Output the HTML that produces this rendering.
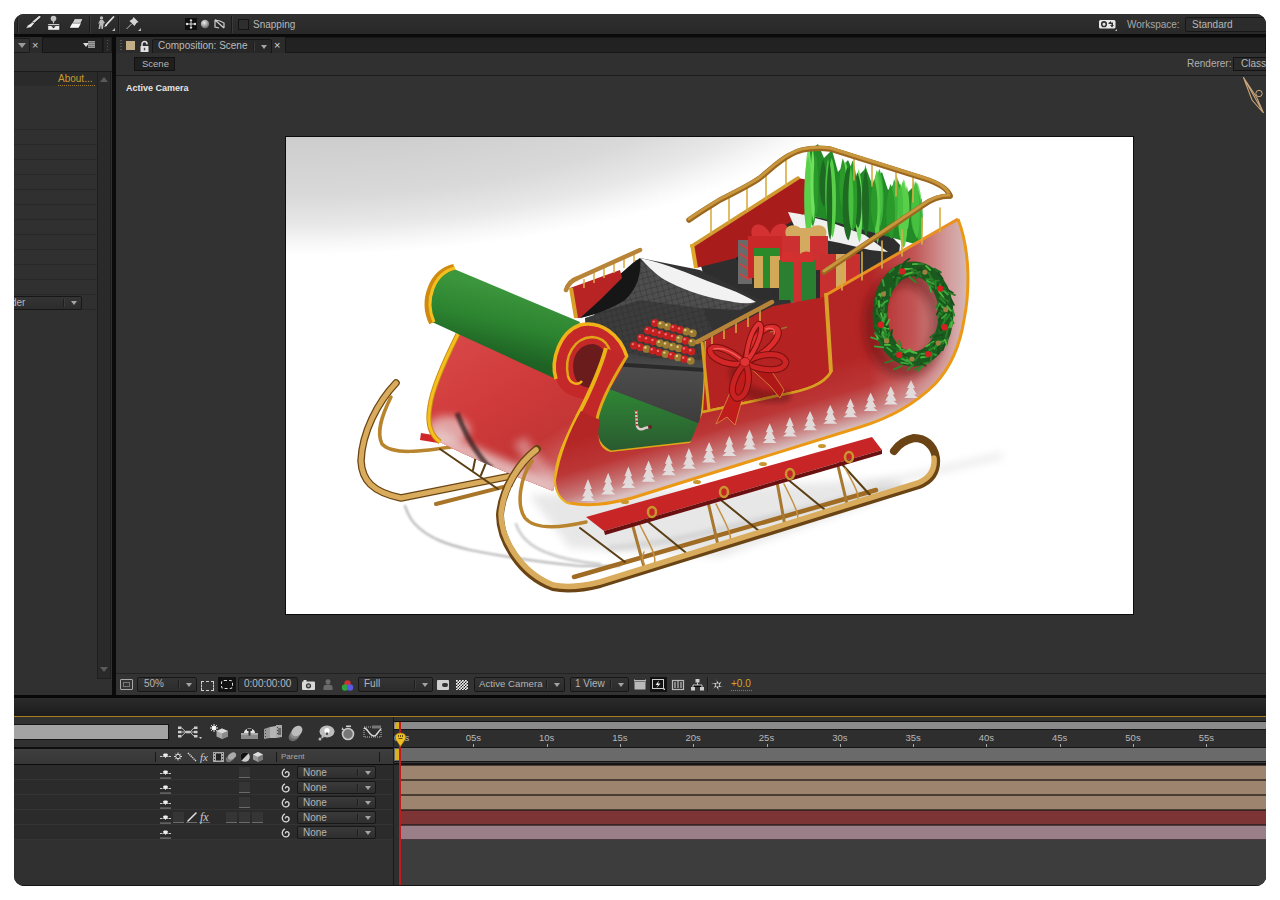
<!DOCTYPE html>
<html><head><meta charset="utf-8">
<style>
*{margin:0;padding:0;box-sizing:border-box}
html,body{width:1280px;height:900px;background:#fff;overflow:hidden;font-family:"Liberation Sans",sans-serif;font-size:10px;color:#b4b4b4}
.a{position:absolute}
#win{position:absolute;left:0;top:0;width:1280px;height:900px;background:#0a0a0a;clip-path:inset(14px 14px 14px 14px round 10px)}
.t{position:absolute;white-space:nowrap;line-height:10px;height:10px}
.dd{position:absolute;background:linear-gradient(#343434,#2c2c2c);border:1px solid #171717;border-radius:2px}
.dd .ar{position:absolute;right:4px;top:50%;margin-top:-2px;width:0;height:0;border-left:3.5px solid transparent;border-right:3.5px solid transparent;border-top:4px solid #a4a4a4}
.dd .sp{position:absolute;right:16px;top:2px;bottom:2px;width:2px;border-left:1px solid #1e1e1e;border-right:1px solid #3c3c3c}
.sep{position:absolute;width:2px;border-left:1px solid #1a1a1a;border-right:1px solid #3a3a3a}
svg{position:absolute;overflow:visible}
</style></head><body>
<div id="win">
  <!-- ===== toolbar ===== -->
  <div class="a" style="left:14px;top:14px;width:1252px;height:20px;background:linear-gradient(#303030,#282828)"></div>
  <div class="a" style="left:14px;top:34px;width:1252px;height:3px;background:#0a0a0a"></div>
  <div class="sep" style="left:17px;top:18px;height:15px"></div>
  <div class="sep" style="left:89px;top:16px;height:17px"></div>
  <div class="sep" style="left:118px;top:16px;height:17px"></div>
  <div class="sep" style="left:231px;top:16px;height:17px"></div>
  <!-- brush -->
  <svg style="left:25px;top:16px" width="16" height="13" viewBox="0 0 16 13">
    <path d="M14.5 0.8 L7.5 6.8" stroke="#111" stroke-width="3.6" stroke-linecap="round"/>
    <path d="M14.5 0.8 L7.5 6.8" stroke="#d8d8d8" stroke-width="2.2" stroke-linecap="round"/>
    <path d="M8 5.8 L2.8 9.2 L0.6 12.4 L5.8 11.6 L9.3 7.6 Z" fill="#e8e8e8" stroke="#111" stroke-width="0.6"/>
  </svg>
  <!-- stamp -->
  <svg style="left:47px;top:15px" width="14" height="16" viewBox="0 0 14 16">
    <circle cx="6.5" cy="3.6" r="2.8" fill="#c4c4c4"/>
    <rect x="5.9" y="6" width="1.2" height="3" fill="#ccc"/>
    <path d="M0.7 8.7 H12.8 V15.3 H0.7 Z" fill="#eeeeee" stroke="#111" stroke-width="0.8"/>
    <rect x="0.7" y="10" width="12.1" height="1" fill="#444"/>
    <path d="M4.3 11.2 L8.7 11.2 L6.5 13.3 Z" fill="#1a1a1a"/>
  </svg>
  <!-- eraser -->
  <svg style="left:69px;top:18px" width="15" height="11" viewBox="0 0 15 11">
    <path d="M5.5 0.6 H14.2 L9.5 9.8 H0.8 Z" fill="#d0d0d0" stroke="#111" stroke-width="0.8"/>
    <path d="M3.3 5.2 H12 L9.5 9.8 H0.8 Z" fill="#f6f6f6"/>
    <path d="M3.3 5.2 H12" stroke="#888" stroke-width="0.8"/>
  </svg>
  <!-- roto brush -->
  <svg style="left:97px;top:16px" width="19" height="15" viewBox="0 0 19 15">
    <circle cx="4.5" cy="2" r="1.7" fill="#bbb"/>
    <path d="M3 4 L6 4 L8 7 L6.5 7.5 L6 13 L4.5 13 L4 9 L3 13 L1.5 13 L2.5 7 L1 8 Z" fill="#b8b8b8"/>
    <path d="M16.5 1 L9 9" stroke="#e0e0e0" stroke-width="1.8" stroke-linecap="round"/>
    <path d="M9.5 8 L7 11 L10 10 Z" fill="#eee"/>
    <path d="M15 15 L18 12 L18 15 Z" fill="#bbb"/>
  </svg>
  <!-- pin -->
  <svg style="left:126px;top:16px" width="15" height="15" viewBox="0 0 15 15">
    <path d="M7.5 1 L12.5 6 L10.5 7 L8.5 10 L3.5 5 L6.5 3 Z" fill="#d4d4d4"/>
    <path d="M5.5 8 L0.5 13" stroke="#bbb" stroke-width="1"/>
    <path d="M12 15 L15 12 L15 15 Z" fill="#bbb"/>
  </svg>
  <!-- axis -->
  <div class="a" style="left:185px;top:18px;width:12px;height:12px;background:#0e0e0e"></div>
  <svg style="left:185px;top:18px" width="12" height="12" viewBox="0 0 12 12">
    <path d="M6 1.5 V10.5 M1.5 6 H10.5" stroke="#ddd" stroke-width="1"/>
    <path d="M6 1 L4.5 3 H7.5 Z M6 11 L4.5 9 H7.5 Z" fill="#ddd"/>
    <circle cx="2" cy="6" r="1.2" fill="#ddd"/><circle cx="10" cy="6" r="1.2" fill="#ddd"/>
  </svg>
  <svg style="left:200px;top:19px" width="10" height="10" viewBox="0 0 10 10">
    <defs><radialGradient id="sph" cx="0.4" cy="0.35" r="0.6"><stop offset="0" stop-color="#eee"/><stop offset="1" stop-color="#777"/></radialGradient></defs>
    <circle cx="5" cy="5" r="4.2" fill="url(#sph)"/>
  </svg>
  <svg style="left:214px;top:19px" width="11" height="10" viewBox="0 0 11 10">
    <path d="M1 1 L10 9 M1 1 V8 L5 9 M1 1 L6 2 L10 4 V9" stroke="#d0d0d0" stroke-width="1.2" fill="none"/>
  </svg>
  <div class="a" style="left:238px;top:19px;width:11px;height:11px;background:#2e2e2e;border:1px solid #141414"></div>
  <div class="t" style="left:253px;top:20px;color:#b8b8b8">Snapping</div>

  <!-- workspace -->
  <svg style="left:1099px;top:20px" width="18" height="11" viewBox="0 0 18 11">
    <rect x="0" y="0" width="16.5" height="8.5" rx="1.5" fill="#e8e8e8"/>
    <circle cx="5" cy="4.2" r="2.3" fill="none" stroke="#333" stroke-width="1.6"/>
    <path d="M9.5 3 L12 1 L12 2.5 H14 V5 L15 5 L13 7.5 L11 5 H12.5 V4 H9.5 Z" fill="#333"/>
    <path d="M16 11 L18 9 L18 11 Z" fill="#ccc"/>
  </svg>
  <div class="t" style="left:1127px;top:20px;color:#a8a8a8">Workspace:</div>
  <div class="a" style="left:1185px;top:17px;width:90px;height:15px;background:#2c2c2c;border:1px solid #171717;border-radius:2px"></div>
  <div class="t" style="left:1192px;top:20px;color:#b8b8b8">Standard</div>

  <!-- ===== left panel ===== -->
  <div class="a" style="left:14px;top:37px;width:98px;height:16px;background:#2b2b2b"></div>
  <div class="a" style="left:14px;top:38px;width:16px;height:15px;background:#303030;border:1px solid #1a1a1a;border-left:none;border-radius:0 2px 2px 0"></div>
  <div class="a" style="left:18px;top:43px;width:0;height:0;border-left:4px solid transparent;border-right:4px solid transparent;border-top:5px solid #9a9a9a"></div>
  <div class="t" style="left:32px;top:40px;color:#ccc;font-size:11px">×</div>
  <div class="a" style="left:42px;top:37px;width:61px;height:16px;background:#222;border:1px solid #161616"></div>
  <div class="a" style="left:83px;top:43px;width:0;height:0;border-left:3px solid transparent;border-right:3px solid transparent;border-top:4px solid #ddd"></div>
  <div class="a" style="left:88px;top:41px;width:7px;height:7px;background:repeating-linear-gradient(#9a9a9a 0 1px,#777 1px 2px)"></div>
  <div class="a" style="left:103px;top:37px;width:9px;height:16px;background:#262626;border:1px solid #1c1c1c"></div>
  <div class="a" style="left:107px;top:40px;width:1px;height:10px;background:repeating-linear-gradient(#555 0 1px,transparent 1px 3px)"></div>
  <div class="a" style="left:14px;top:53px;width:98px;height:18px;background:#303030"></div>
  <div class="a" style="left:14px;top:71px;width:98px;height:1px;background:#1a1a1a"></div>
  <div class="a" style="left:14px;top:72px;width:98px;height:623px;background:#303030"></div>
  <div class="a" style="left:14px;top:72px;width:83px;height:14px;background:#2a2a2a"></div>
  <div class="t" style="left:58px;top:74px;color:#c89b2e">About...</div>
  <div class="a" style="left:58px;top:85px;width:37px;height:1px;background:repeating-linear-gradient(90deg,#a07a20 0 1px,transparent 1px 2px)"></div>
  <div class="a" style="left:14px;top:129px;width:83px;height:1px;background:#282828"></div>
  <div class="a" style="left:14px;top:144px;width:83px;height:1px;background:#282828"></div>
  <div class="a" style="left:14px;top:159px;width:83px;height:1px;background:#282828"></div>
  <div class="a" style="left:14px;top:174px;width:83px;height:1px;background:#282828"></div>
  <div class="a" style="left:14px;top:189px;width:83px;height:1px;background:#282828"></div>
  <div class="a" style="left:14px;top:204px;width:83px;height:1px;background:#282828"></div>
  <div class="a" style="left:14px;top:219px;width:83px;height:1px;background:#282828"></div>
  <div class="a" style="left:14px;top:234px;width:83px;height:1px;background:#282828"></div>
  <div class="a" style="left:14px;top:249px;width:83px;height:1px;background:#282828"></div>
  <div class="a" style="left:14px;top:264px;width:83px;height:1px;background:#282828"></div>
  <div class="a" style="left:14px;top:279px;width:83px;height:1px;background:#282828"></div>
  <div class="a" style="left:14px;top:294px;width:83px;height:1px;background:#282828"></div>
  <div class="a" style="left:14px;top:309px;width:83px;height:1px;background:#282828"></div>
  <div class="a" style="left:97px;top:72px;width:14px;height:607px;background:#2a2a2a;border-left:1px solid #1e1e1e;border-right:1px solid #1e1e1e;border-bottom:1px solid #1e1e1e"></div>
  <div class="a" style="left:100px;top:77px;width:0;height:0;border-left:4px solid transparent;border-right:4px solid transparent;border-bottom:5px solid #5a5a5a"></div>
  <div class="a" style="left:100px;top:667px;width:0;height:0;border-left:4px solid transparent;border-right:4px solid transparent;border-top:5px solid #5a5a5a"></div>
  <div class="dd" style="left:0px;top:296px;width:82px;height:14px"><div class="sp"></div><div class="ar"></div></div>
  <div class="t" style="left:11px;top:298px;color:#b8b8b8">der</div>
  <div class="a" style="left:112px;top:37px;width:4px;height:661px;background:#0a0a0a"></div>

  <!-- ===== comp panel ===== -->
  <div class="a" style="left:116px;top:37px;width:1150px;height:16px;background:#2b2b2b"></div>
  <div class="a" style="left:120px;top:40px;width:2px;height:10px;background:repeating-linear-gradient(#555 0 1px,transparent 1px 3px)"></div>
  <div class="a" style="left:126px;top:41px;width:9px;height:9px;background:#c2ad86"></div>
  <svg style="left:140px;top:41px" width="9" height="11" viewBox="0 0 9 11">
    <path d="M2 5 V3 A2.5 2.5 0 0 1 7 3 V3.5" stroke="#ddd" stroke-width="1.5" fill="none"/>
    <rect x="0.5" y="5" width="8" height="6" fill="#e0e0e0"/>
    <rect x="3.8" y="6.8" width="1.4" height="2.5" fill="#444"/>
  </svg>
  <div class="dd" style="left:152px;top:39px;width:120px;height:15px;background:#272727"><div class="sp"></div><div class="ar"></div></div>
  <div class="t" style="left:158px;top:41px;color:#bcbcbc">Composition: Scene</div>
  <div class="t" style="left:274px;top:40px;color:#d8d8d8;font-size:11px">×</div>
  <div class="a" style="left:285px;top:37px;width:981px;height:16px;background:#222;border:1px solid #161616"></div>
  <div class="a" style="left:116px;top:53px;width:1150px;height:22px;background:#303030"></div>
  <div class="a" style="left:134px;top:57px;width:41px;height:14px;background:#1f1f1f;border:1px solid #121212"></div>
  <div class="t" style="left:142px;top:59px;color:#b8b8b8;font-size:9.5px">Scene</div>
  <div class="t" style="left:1187px;top:59px;color:#b0b0b0">Renderer:</div>
  <div class="a" style="left:1233px;top:57px;width:40px;height:14px;background:#2a2a2a;border:1px solid #121212"></div>
  <div class="t" style="left:1241px;top:59px;color:#b8b8b8">Class</div>
  <div class="a" style="left:116px;top:75px;width:1150px;height:1px;background:#1c1c1c"></div>
  <div class="a" style="left:116px;top:76px;width:1150px;height:598px;background:#323232"></div>
  <div class="t" style="left:126px;top:83px;color:#e4e4e4;font-size:9px;font-weight:bold">Active Camera</div>
  <svg style="left:1242px;top:76px" width="24" height="40" viewBox="0 0 24 40">
    <path d="M1.5 1.5 L21.5 37 M1.5 1.5 L15 22 L21.5 37 M1.5 1.5 L10 24 L21.5 37" stroke="#c9a57a" stroke-width="1.1" fill="none"/>
    <circle cx="17" cy="17.5" r="3.2" stroke="#c9a57a" stroke-width="1" fill="none"/>
  </svg>

  <!-- comp image placeholder -->
  <div class="a" style="left:285px;top:136px;width:849px;height:479px;background:#0c0c0c"></div>
  <div class="a" style="left:286px;top:137px;width:847px;height:477px;background:radial-gradient(620px 255px at 14px -137px,#c8c8c8 0%,#cdcdcd 53.7%,#d9d9d9 76.7%,#e8e8e8 88.2%,#f8f8f8 95.7%,#fff 100%)"></div>
  <svg style="left:286px;top:137px" width="847" height="477" viewBox="286 137 847 477">
<defs>
  <linearGradient id="redL" gradientUnits="userSpaceOnUse" x1="450" y1="340" x2="540" y2="480">
    <stop offset="0" stop-color="#d84848"/><stop offset="0.45" stop-color="#d03a3a"/><stop offset="0.8" stop-color="#c43636"/><stop offset="1" stop-color="#cc6060"/>
  </linearGradient>
  <linearGradient id="redP" gradientUnits="userSpaceOnUse" x1="700" y1="410" x2="720" y2="480">
    <stop offset="0" stop-color="#b82a2a"/><stop offset="0.5" stop-color="#c04444"/><stop offset="1" stop-color="#d0a8a8"/>
  </linearGradient>
  <linearGradient id="redR" gradientUnits="userSpaceOnUse" x1="830" y1="300" x2="972" y2="300">
    <stop offset="0" stop-color="#b02424"/><stop offset="0.45" stop-color="#b82828"/><stop offset="0.75" stop-color="#c86060"/><stop offset="1" stop-color="#d8c4c4"/>
  </linearGradient>
  <linearGradient id="grn" gradientUnits="userSpaceOnUse" x1="510" y1="290" x2="495" y2="355">
    <stop offset="0" stop-color="#3c963c"/><stop offset="0.5" stop-color="#2c8430"/><stop offset="1" stop-color="#1e6224"/>
  </linearGradient>
  <linearGradient id="floor" gradientUnits="userSpaceOnUse" x1="640" y1="385" x2="640" y2="450">
    <stop offset="0" stop-color="#2f8a34"/><stop offset="1" stop-color="#2a5a30"/>
  </linearGradient>
  <linearGradient id="seatF" gradientUnits="userSpaceOnUse" x1="0" y1="345" x2="0" y2="425">
    <stop offset="0" stop-color="#3a3a3a"/><stop offset="0.3" stop-color="#4c4c4c"/><stop offset="1" stop-color="#3c3c3c"/>
  </linearGradient>
  <linearGradient id="quilt" gradientUnits="userSpaceOnUse" x1="630" y1="260" x2="700" y2="320">
    <stop offset="0" stop-color="#2a2a2a"/><stop offset="0.5" stop-color="#5a5a5a"/><stop offset="1" stop-color="#4a4a4a"/>
  </linearGradient>
  <pattern id="qp" patternUnits="userSpaceOnUse" width="8" height="8" patternTransform="rotate(30)">
    <path d="M0 0 L8 8 M8 0 L0 8" stroke="#2a2a2a" stroke-width="0.8" opacity="0.6"/>
  </pattern>
  <linearGradient id="redB" gradientUnits="userSpaceOnUse" x1="760" y1="385" x2="779" y2="450">
    <stop offset="0" stop-color="#b42626"/><stop offset="0.45" stop-color="#bc3636"/><stop offset="0.8" stop-color="#c87a7a"/><stop offset="1" stop-color="#d8c0c0"/>
  </linearGradient>
  <linearGradient id="fogR" gradientUnits="userSpaceOnUse" x1="870" y1="0" x2="968" y2="0">
    <stop offset="0" stop-color="#ffffff" stop-opacity="0"/><stop offset="0.45" stop-color="#e8e0e0" stop-opacity="0.25"/><stop offset="0.75" stop-color="#e4dcdc" stop-opacity="0.6"/><stop offset="1" stop-color="#dcd4d4" stop-opacity="0.85"/>
  </linearGradient>
  <filter id="b4" x="-50%" y="-50%" width="200%" height="200%"><feGaussianBlur stdDeviation="4"/></filter>
  <filter id="b2" x="-50%" y="-50%" width="200%" height="200%"><feGaussianBlur stdDeviation="2"/></filter>
  <filter id="b1"><feGaussianBlur stdDeviation="0.8"/></filter>
</defs>

<!-- ground shadows -->
<path d="M529 495 L720 488 L900 478 L880 500 L720 557 L570 548 Z" fill="#dedede" opacity="0.7" filter="url(#b4)"/>
<g fill="none" stroke-linecap="round">
  <path d="M405 506 C408 515 412 522 418 527 C430 538 445 544 470 550 C500 556 540 562 580 566 L620 566" stroke="#a8a8a8" stroke-width="2.2" opacity="0.85" filter="url(#b1)"/>
  <path d="M516 524 C520 536 528 545 545 552 C560 558 575 562 600 564" stroke="#b4b4b4" stroke-width="2.5" opacity="0.7" filter="url(#b1)"/>
  <path d="M610 548 C660 545 720 530 760 520 L900 486" stroke="#c8c8c8" stroke-width="6" opacity="0.6" filter="url(#b2)"/>
  <path d="M870 486 L1000 456" stroke="#d4d4d4" stroke-width="5" opacity="0.6" filter="url(#b4)"/>
</g>
<!-- ===== back runner ===== -->
<g fill="none" stroke-linecap="round" stroke-linejoin="round">
  <path d="M436 504 L511 485" stroke="#a87428" stroke-width="4"/>
  <path d="M396 383 C378 402 362 432 361 461 C362 480 372 492 401 498 L511 476" stroke="#6a4414" stroke-width="7.5"/>
  <path d="M396 383 C378 402 362 432 361 461 C362 480 372 492 401 498 L511 476" stroke="#d8ac5c" stroke-width="5"/>
  <path d="M391 397 C382 415 376 432 382 444 C392 455 420 452 457 446" stroke="#b8842e" stroke-width="3.5"/>
  <path d="M440 449 L498 489 M473 470 L476 455 M481 475 L488 458" stroke="#5a3e14" stroke-width="2"/>
</g>
<path d="M421 433 L439 436 L438 443 L420 440 Z" fill="#d02828"/>

<!-- ===== back compartment ===== -->
<!-- back seat base -->
<path d="M700 262 L740 250 L800 215 L880 225 L900 245 L895 290 L830 300 L760 305 L710 300 Z" fill="#2e2e2e"/>
<path d="M740 262 L810 225 L880 240 L860 290 L780 300 Z" fill="url(#qp)"/>
<!-- back panel -->
<path d="M692 246 L798 178 L808 180 L808 212 L760 240 L736 258 L696 268 Z" fill="#a81c1c"/>
<path d="M736 258 C760 248 790 225 808 212 L808 225 C790 240 760 260 740 265 Z" fill="#1e1e1e"/>
<path d="M692 246 L798 178" stroke="#d09a30" stroke-width="3.5" stroke-linecap="round"/>
<path d="M692 244 L696 268" stroke="#e0a828" stroke-width="4"/>
<!-- snow -->
<path d="M788 212 L800 214 L830 222 L865 235 L888 252 L870 250 L840 243 L815 238 L795 228 Z" fill="#f0f0f0"/>
<!-- tree -->
<g><path d="M806 170 L810 150 L818 144 L824 158 L832 150 L838 172 L848 160 L856 178 L866 168 L872 184 L882 172 L888 190 L898 180 L904 196 L914 186 L922 200 L922 246 L806 214 Z" fill="#228a26"/><path d="M858.7 169.0 C863.5 181.0 863.5 232.4 859.7 242.4 C853.8 234.4 853.8 185.0 858.7 169.0 Z" fill="#70e060"/><path d="M903.8 179.1 C908.7 191.1 908.7 232.7 904.8 242.7 C898.9 234.7 898.9 195.1 903.8 179.1 Z" fill="#70e060"/><path d="M896.8 175.5 C900.2 187.5 900.2 214.5 897.8 224.5 C893.5 216.5 893.5 191.5 896.8 175.5 Z" fill="#48c040"/><path d="M879.1 176.2 C883.9 188.2 883.9 216.0 880.1 226.0 C874.2 218.0 874.2 192.2 879.1 176.2 Z" fill="#48c040"/><path d="M876.9 169.8 C882.1 181.8 882.1 202.4 877.9 212.4 C871.8 204.4 871.8 185.8 876.9 169.8 Z" fill="#5ad04a"/><path d="M812.0 157.8 C818.1 169.8 818.1 216.4 813.0 226.4 C805.9 218.4 805.9 173.8 812.0 157.8 Z" fill="#2a9a2a"/><path d="M857.3 172.2 C862.9 184.2 862.9 218.1 858.3 228.1 C851.8 220.1 851.8 188.2 857.3 172.2 Z" fill="#1e6a22"/><path d="M808.5 146.3 C813.1 158.3 813.1 218.0 809.5 228.0 C803.9 220.0 803.9 162.3 808.5 146.3 Z" fill="#70e060"/><path d="M919.5 192.7 C923.8 204.7 923.8 230.9 920.5 240.9 C915.3 232.9 915.3 208.7 919.5 192.7 Z" fill="#3cb03c"/><path d="M865.4 164.3 C868.9 176.3 868.9 220.5 866.4 230.5 C862.0 222.5 862.0 180.3 865.4 164.3 Z" fill="#5ad04a"/><path d="M902.8 181.3 C909.2 193.3 909.2 238.0 903.8 248.0 C896.4 240.0 896.4 197.3 902.8 181.3 Z" fill="#5ad04a"/><path d="M831.9 164.9 C836.4 176.9 836.4 199.2 832.9 209.2 C827.4 201.2 827.4 180.9 831.9 164.9 Z" fill="#48c040"/><path d="M852.5 160.6 C858.6 172.6 858.6 221.5 853.5 231.5 C846.4 223.5 846.4 176.6 852.5 160.6 Z" fill="#2a9a2a"/><path d="M845.7 161.5 C850.4 173.5 850.4 199.3 846.7 209.3 C841.1 201.3 841.1 177.5 845.7 161.5 Z" fill="#5ad04a"/><path d="M823.1 159.2 C827.9 171.2 827.9 196.9 824.1 206.9 C818.2 198.9 818.2 175.2 823.1 159.2 Z" fill="#1e6a22"/><path d="M827.9 158.8 C831.7 170.8 831.7 212.6 828.9 222.6 C824.1 214.6 824.1 174.8 827.9 158.8 Z" fill="#48c040"/><path d="M894.2 178.9 C898.8 190.9 898.8 217.0 895.2 227.0 C889.6 219.0 889.6 194.9 894.2 178.9 Z" fill="#3cb03c"/><path d="M808.1 156.3 C813.4 168.3 813.4 229.1 809.1 239.1 C802.7 231.1 802.7 172.3 808.1 156.3 Z" fill="#5ad04a"/><path d="M831.6 157.9 C837.2 169.9 837.2 227.3 832.6 237.3 C826.0 229.3 826.0 173.9 831.6 157.9 Z" fill="#5ad04a"/><path d="M812.7 148.5 C815.8 160.5 815.8 210.9 813.7 220.9 C809.7 212.9 809.7 164.5 812.7 148.5 Z" fill="#70e060"/><path d="M844.8 161.0 C848.2 173.0 848.2 201.3 845.8 211.3 C841.5 203.3 841.5 177.0 844.8 161.0 Z" fill="#70e060"/><path d="M879.3 168.7 C884.8 180.7 884.8 215.0 880.3 225.0 C873.8 217.0 873.8 184.7 879.3 168.7 Z" fill="#3cb03c"/><path d="M915.4 186.7 C921.9 198.7 921.9 225.9 916.4 235.9 C909.0 227.9 909.0 202.7 915.4 186.7 Z" fill="#3cb03c"/><path d="M878.3 172.2 C883.7 184.2 883.7 210.0 879.3 220.0 C872.8 212.0 872.8 188.2 878.3 172.2 Z" fill="#48c040"/><path d="M829.3 161.6 C833.0 173.6 833.0 230.0 830.3 240.0 C825.5 232.0 825.5 177.6 829.3 161.6 Z" fill="#1e6a22"/><path d="M906.8 185.5 C910.2 197.5 910.2 219.6 907.8 229.6 C903.4 221.6 903.4 201.5 906.8 185.5 Z" fill="#5ad04a"/><path d="M865.4 167.3 C870.0 179.3 870.0 226.6 866.4 236.6 C860.8 228.6 860.8 183.3 865.4 167.3 Z" fill="#1e6a22"/><path d="M900.3 183.2 C904.0 195.2 904.0 214.5 901.3 224.5 C896.6 216.5 896.6 199.2 900.3 183.2 Z" fill="#48c040"/><path d="M917.4 182.8 C923.1 194.8 923.1 222.7 918.4 232.7 C911.8 224.7 911.8 198.8 917.4 182.8 Z" fill="#70e060"/><path d="M876.8 171.3 C880.6 183.3 880.6 234.0 877.8 244.0 C873.0 236.0 873.0 187.3 876.8 171.3 Z" fill="#5ad04a"/><path d="M815.7 152.9 C818.9 164.9 818.9 204.5 816.7 214.5 C812.6 206.5 812.6 168.9 815.7 152.9 Z" fill="#2a9a2a"/><path d="M849.3 166.1 C853.8 178.1 853.8 203.7 850.3 213.7 C844.9 205.7 844.9 182.1 849.3 166.1 Z" fill="#1e6a22"/><path d="M917.8 189.8 C923.2 201.8 923.2 230.2 918.8 240.2 C912.5 232.2 912.5 205.8 917.8 189.8 Z" fill="#3cb03c"/><path d="M874.1 178.8 C878.5 190.8 878.5 218.2 875.1 228.2 C869.6 220.2 869.6 194.8 874.1 178.8 Z" fill="#2a9a2a"/><path d="M915.8 180.9 C920.8 192.9 920.8 228.0 916.8 238.0 C910.9 230.0 910.9 196.9 915.8 180.9 Z" fill="#48c040"/><path d="M842.8 158.3 C847.7 170.3 847.7 201.0 843.8 211.0 C838.0 203.0 838.0 174.3 842.8 158.3 Z" fill="#2a9a2a"/><path d="M890.5 183.9 C896.4 195.9 896.4 229.1 891.5 239.1 C884.7 231.1 884.7 199.9 890.5 183.9 Z" fill="#2a9a2a"/><path d="M847.4 166.9 C853.9 178.9 853.9 230.5 848.4 240.5 C840.9 232.5 840.9 182.9 847.4 166.9 Z" fill="#1e6a22"/><path d="M913.8 180.3 C916.8 192.3 916.8 223.1 914.8 233.1 C910.7 225.1 910.7 196.3 913.8 180.3 Z" fill="#48c040"/><path d="M850.8 166.7 C854.1 178.7 854.1 220.6 851.8 230.6 C847.5 222.6 847.5 182.7 850.8 166.7 Z" fill="#48c040"/></g>
<!-- presents -->
<g>
  <rect x="738" y="240" width="14" height="44" fill="#6a6a6a"/>
  <path d="M740 244 L750 250 M740 254 L750 260 M740 264 L750 270 M740 274 L750 280" stroke="#d04040" stroke-width="2"/>
  <rect x="748" y="236" width="44" height="42" fill="#c82828"/>
  <path d="M752 236 C748 222 764 220 770 234 C774 220 792 220 788 236 Z" fill="#d43232"/>
  <rect x="782" y="236" width="46" height="34" fill="#cc3030"/>
  <rect x="800" y="228" width="10" height="42" fill="#d4aa60"/>
  <path d="M786 236 C782 222 800 222 805 234 C810 222 830 222 826 236 Z" fill="#d4aa60"/>
  <rect x="754" y="252" width="26" height="36" fill="#d0a858"/>
  <rect x="763" y="248" width="7" height="40" fill="#2a8a2a"/>
  <rect x="754" y="248" width="26" height="8" fill="#2a8a2a"/>
  <rect x="779" y="260" width="37" height="42" fill="#2a8030"/>
  <rect x="793" y="258" width="9" height="44" fill="#cc3030"/>
  <path d="M781 262 C778 250 792 248 797 258 C802 248 816 250 814 262 Z" fill="#d43030"/>
  <rect x="820" y="254" width="40" height="50" fill="#c83030"/>
  <rect x="836" y="254" width="10" height="50" fill="#d4aa60"/>
</g>
<!-- back rail -->
<g fill="none" stroke-linecap="round" stroke-linejoin="round">
  <g stroke="#d8ac40" stroke-width="1.6">
    <path d="M711 205 V234 M729 195 V222 M747 185 V211 M766 172 V199 M786 158 V186"/>
    <path d="M854 159 V180 M872 165 V186 M896 172 V196 M913 178 V202"/>
  </g>
  <path d="M689 220 C700 212 712 205 720 200 C740 190 752 184 760 178 C772 168 780 160 790 155 C800 149 812 147 830 149 L922 178 C935 182 948 188 950 196" stroke="#9a6620" stroke-width="5.5"/>
  <path d="M689 219 C700 211 712 204 720 199 C740 189 752 183 760 177 C772 167 780 159 790 154 C800 148 812 146 830 148 L922 177 C935 181 946 186 949 194" stroke="#c8963c" stroke-width="3"/>
</g>

<!-- ===== front compartment ===== -->
<!-- back dark fill between seats -->
<path d="M640 258 L700 270 L760 300 L790 300 L800 330 L706 345 L640 300 Z" fill="#333"/>
<!-- seat front face + floor -->
<path d="M585 318 L640 300 L705 310 L706 425 L690 442 L605 450 L590 420 Z" fill="url(#seatF)"/>
<path d="M612 362 L705 368 L705 372 L612 366 Z" fill="#2a2a2a"/>
<path d="M596 388 L612 390 L706 426 L700 440 L690 444 L608 452 L598 440 Z" fill="url(#floor)"/>
<path d="M636 410 L637 426 C638 430 642 430 645 428 L650 427" stroke="#dccccc" stroke-width="2.4" fill="none"/><path d="M636 410 L637 426" stroke="#b03030" stroke-width="2.4" fill="none" stroke-dasharray="1.5 2"/><circle cx="650" cy="427" r="2" fill="#6a2020"/>
<!-- seat cushion quilt -->
<path d="M594 310 L636 290 L700 300 L712 330 L704 360 L650 358 L615 350 L596 335 Z" fill="#3c3c3c"/>
<path d="M594 310 L636 290 L700 300 L712 330 L704 360 L650 358 L615 350 L596 335 Z" fill="url(#qp)"/>
<!-- seat back -->
<path d="M580 318 L618 276 L636 260 L700 282 L756 302 L740 310 L700 308 L640 300 L600 312 Z" fill="#4e4e4e"/>
<path d="M636 260 L700 282 L756 302 L740 310 L700 308 L640 300 L600 312 Z" fill="url(#qp)"/>
<path d="M580 318 C590 300 605 285 618 276 C628 268 634 262 640 258 C642 275 636 290 625 300 C612 308 598 314 580 318 Z" fill="#161616"/>
<path d="M640 258 C660 262 680 270 700 278 C720 286 740 292 756 302 C745 305 735 302 722 300 C700 296 680 288 665 280 C655 274 648 266 640 258 Z" fill="#f2f2f2"/>
<!-- beads -->
<g><circle cx="655.0" cy="323.0" r="3.9" fill="#c42020"/><circle cx="653.8" cy="321.6" r="1.2" fill="#f07070"/><circle cx="661.3" cy="324.7" r="3.9" fill="#9a7a30"/><circle cx="660.1" cy="323.3" r="1.2" fill="#e8cc80"/><circle cx="667.6" cy="326.4" r="3.9" fill="#9a7a30"/><circle cx="666.4" cy="325.0" r="1.2" fill="#e8cc80"/><circle cx="673.9" cy="328.1" r="3.9" fill="#c42020"/><circle cx="672.7" cy="326.7" r="1.2" fill="#f07070"/><circle cx="680.2" cy="329.8" r="3.9" fill="#c42020"/><circle cx="679.0" cy="328.4" r="1.2" fill="#f07070"/><circle cx="686.5" cy="331.5" r="3.9" fill="#9a7a30"/><circle cx="685.3" cy="330.1" r="1.2" fill="#e8cc80"/><circle cx="692.8" cy="333.2" r="3.9" fill="#9a7a30"/><circle cx="691.6" cy="331.8" r="1.2" fill="#e8cc80"/><circle cx="648.0" cy="330.5" r="3.9" fill="#c42020"/><circle cx="646.8" cy="329.1" r="1.2" fill="#f07070"/><circle cx="654.3" cy="332.2" r="3.9" fill="#c42020"/><circle cx="653.1" cy="330.8" r="1.2" fill="#f07070"/><circle cx="660.6" cy="333.9" r="3.9" fill="#c42020"/><circle cx="659.4" cy="332.5" r="1.2" fill="#f07070"/><circle cx="666.9" cy="335.6" r="3.9" fill="#c42020"/><circle cx="665.7" cy="334.2" r="1.2" fill="#f07070"/><circle cx="673.2" cy="337.3" r="3.9" fill="#c42020"/><circle cx="672.0" cy="335.9" r="1.2" fill="#f07070"/><circle cx="679.5" cy="339.0" r="3.9" fill="#9a7a30"/><circle cx="678.3" cy="337.6" r="1.2" fill="#e8cc80"/><circle cx="685.8" cy="340.7" r="3.9" fill="#c42020"/><circle cx="684.6" cy="339.3" r="1.2" fill="#f07070"/><circle cx="692.1" cy="342.4" r="3.9" fill="#9a7a30"/><circle cx="690.9" cy="341.0" r="1.2" fill="#e8cc80"/><circle cx="641.0" cy="338.0" r="3.9" fill="#c42020"/><circle cx="639.8" cy="336.6" r="1.2" fill="#f07070"/><circle cx="647.3" cy="339.7" r="3.9" fill="#c42020"/><circle cx="646.1" cy="338.3" r="1.2" fill="#f07070"/><circle cx="653.6" cy="341.4" r="3.9" fill="#c42020"/><circle cx="652.4" cy="340.0" r="1.2" fill="#f07070"/><circle cx="659.9" cy="343.1" r="3.9" fill="#9a7a30"/><circle cx="658.7" cy="341.7" r="1.2" fill="#e8cc80"/><circle cx="666.2" cy="344.8" r="3.9" fill="#9a7a30"/><circle cx="665.0" cy="343.4" r="1.2" fill="#e8cc80"/><circle cx="672.5" cy="346.5" r="3.9" fill="#9a7a30"/><circle cx="671.3" cy="345.1" r="1.2" fill="#e8cc80"/><circle cx="678.8" cy="348.2" r="3.9" fill="#9a7a30"/><circle cx="677.6" cy="346.8" r="1.2" fill="#e8cc80"/><circle cx="685.1" cy="349.9" r="3.9" fill="#c42020"/><circle cx="683.9" cy="348.5" r="1.2" fill="#f07070"/><circle cx="691.4" cy="351.6" r="3.9" fill="#c42020"/><circle cx="690.2" cy="350.2" r="1.2" fill="#f07070"/><circle cx="634.0" cy="345.5" r="3.9" fill="#c42020"/><circle cx="632.8" cy="344.1" r="1.2" fill="#f07070"/><circle cx="640.3" cy="347.2" r="3.9" fill="#c42020"/><circle cx="639.1" cy="345.8" r="1.2" fill="#f07070"/><circle cx="646.6" cy="348.9" r="3.9" fill="#9a7a30"/><circle cx="645.4" cy="347.5" r="1.2" fill="#e8cc80"/><circle cx="652.9" cy="350.6" r="3.9" fill="#c42020"/><circle cx="651.7" cy="349.2" r="1.2" fill="#f07070"/><circle cx="659.2" cy="352.3" r="3.9" fill="#c42020"/><circle cx="658.0" cy="350.9" r="1.2" fill="#f07070"/><circle cx="665.5" cy="354.0" r="3.9" fill="#9a7a30"/><circle cx="664.3" cy="352.6" r="1.2" fill="#e8cc80"/><circle cx="671.8" cy="355.7" r="3.9" fill="#c42020"/><circle cx="670.6" cy="354.3" r="1.2" fill="#f07070"/><circle cx="678.1" cy="357.4" r="3.9" fill="#9a7a30"/><circle cx="676.9" cy="356.0" r="1.2" fill="#e8cc80"/><circle cx="684.4" cy="359.1" r="3.9" fill="#c42020"/><circle cx="683.2" cy="357.7" r="1.2" fill="#f07070"/><circle cx="690.7" cy="360.8" r="3.9" fill="#9a7a30"/><circle cx="689.5" cy="359.4" r="1.2" fill="#e8cc80"/></g>
<!-- front-left small panel + rail -->
<path d="M570 288 L620 270 L622 278 L600 300 L580 318 L576 318 Z" fill="#b82424"/>
<path d="M571 288 L576 318" stroke="#d8a028" stroke-width="4"/>
<g stroke="#d8ac40" stroke-width="1.5"><path d="M584 279 V288 M594 273 V283 M604 268 V278 M614 263 V273 M624 258 V268 M634 253 V262"/></g>
<path d="M566 290 C568 284 572 280 578 278 L640 250" stroke="#b88438" stroke-width="4.5" fill="none" stroke-linecap="round"/>

<!-- ===== left body ===== -->
<clipPath id="lbclip"><path d="M458 334 C445 360 432 390 430 406 C427 422 429 434 440 442 C470 458 520 478 553 491 L556 480 C560 455 570 430 581 411 C590 395 600 378 608 357 L560 340 Z"/></clipPath>
<g clip-path="url(#lbclip)">
  <rect x="420" y="320" width="200" height="180" fill="#cc3434"/>
  <rect x="420" y="320" width="200" height="180" fill="url(#redL)"/>
  <path d="M434 436 C460 452 510 472 558 490" stroke="#ecdada" stroke-width="18" fill="none" opacity="0.75" filter="url(#b4)"/>
  <ellipse cx="448" cy="430" rx="22" ry="14" fill="#e8d0d0" opacity="0.7" filter="url(#b4)"/>
  <path d="M520 440 C530 460 545 475 560 480" stroke="#e8c8c8" stroke-width="14" opacity="0.5" fill="none" filter="url(#b4)"/>
  <path d="M457 413 C462 426 468 440 480 456 C484 462 488 466 492 468" stroke="#2a1a1a" stroke-width="5" fill="none" opacity="0.7" filter="url(#b1)"/>
</g>
<path d="M458 334 C445 360 432 390 430 406 C427 422 429 434 440 442" fill="none" stroke="#c88a10" stroke-width="5"/>
<path d="M458 334 C445 360 432 390 430 406 C427 422 429 434 440 442" fill="none" stroke="#f4c020" stroke-width="3"/>
<!-- ===== cushion ===== -->
<path d="M454 269 L580 322 L556 379 L432 322 C424 310 424 285 446 270 Z" fill="url(#grn)"/>
<path d="M454 267 C432 272 421 300 432 323" fill="none" stroke="#d08a10" stroke-width="6"/><path d="M455 268 C434 273 424 300 434 322" fill="none" stroke="#f4c020" stroke-width="3"/>
<!-- scroll -->
<path d="M556 379 C550 360 560 332 580 325 C600 320 620 334 627 357 C620 375 612 385 606 395 L590 400 C572 398 560 392 556 379 Z" fill="#c42828"/>
<path d="M574 374 C570 356 580 344 593 344 C605 346 609 358 604 370 L592 388 C582 388 576 383 574 374 Z" fill="#6a1c1c"/>
<path d="M556 379 C550 360 560 332 580 325 C600 320 620 334 627 357" fill="none" stroke="#f0b218" stroke-width="3.5"/>
<path d="M568 376 C564 356 574 338 592 337 C608 338 614 352 608 368" fill="none" stroke="#e0a418" stroke-width="2.5"/>
<path d="M568 376 C570 384 578 386 582 381" fill="none" stroke="#f0b218" stroke-width="2.5"/>
<!-- ===== S trim ===== -->
<path d="M606 348 C600 370 590 392 577 417 C566 440 556 460 556 480 C556 492 562 500 570 503 L632 498 L611 453 C600 447 595 437 596 425 C598 405 612 380 627 357 Z" fill="#c22828"/>
<path d="M606 348 C600 370 590 392 577 417 C566 440 556 460 556 480 C556 492 562 500 570 503" fill="none" stroke="#eab418" stroke-width="4"/>
<path d="M627 356 C612 380 598 405 596 425 C595 437 600 447 611 452 L690 443 C700 440 703 420 705 380 L706 341" fill="none" stroke="#e0a818" stroke-width="3"/>
<!-- ===== middle door panel ===== -->
<path d="M706 340 L773 306 L830 296 L831 372 C824 384 808 390 781 395 L703 412 L705 380 Z" fill="#b42222"/>
<path d="M831 296 L831 372 C824 384 808 390 781 395 L703 412" fill="none" stroke="#d8a020" stroke-width="2.5"/>
<g stroke="#d8ac40" stroke-width="1.5"><path d="M712 332 V345 M724 326 V339 M736 320 V333 M748 314 V327 M760 308 V321"/></g>
<path d="M697 342 L772 302" stroke="#b88438" stroke-width="4.5" stroke-linecap="round"/>
<path d="M702 342 L710 420" stroke="#d8a020" stroke-width="3"/>
<path d="M770 332 L787 327" stroke="#a07030" stroke-width="1.8"/>

<!-- ===== lower body + right panel ===== -->
<clipPath id="bodyclip"><path d="M556 480 C556 492 562 500 570 503 C590 507 610 504 632 498 L860 427 C890 418 915 404 935 384 C950 368 960 345 964 320 C970 290 970 250 958 219 L826 295 L831 372 C824 384 808 390 781 395 L703 412 L690 443 L611 452 C600 450 596 440 600 420 L581 411 C570 430 560 455 556 480 Z"/></clipPath>
<g clip-path="url(#bodyclip)">
  <rect x="550" y="210" width="430" height="300" fill="url(#redB)"/>
  <rect x="550" y="210" width="430" height="300" fill="url(#fogR)"/>
</g>
<path d="M826 295 L831 372 C824 384 808 390 781 395 L703 412" fill="none" stroke="#d8a020" stroke-width="2.5"/>
<path d="M570 503 C590 507 610 504 632 498 L860 427 C890 418 915 404 935 384 C950 368 960 345 964 320 C970 290 970 250 958 219" fill="none" stroke="#eb9814" stroke-width="3"/>
<path d="M826 295 L958 219" stroke="#e89020" stroke-width="3"/>
<path d="M826 293 L831 372" stroke="#d8a028" stroke-width="4"/>
<g fill="#e4e4e4" opacity="0.9"><path d="M588.0 479.0 L584.1 488.9 L585.9 488.9 L582.4 496.6 L585.2 496.6 L581.0 501.0 L595.0 501.0 L590.8 496.6 L593.6 496.6 L590.1 488.9 L591.9 488.9 Z M608.2 472.8 L604.3 482.6 L606.1 482.6 L602.6 490.2 L605.4 490.2 L601.2 494.6 L615.2 494.6 L611.0 490.2 L613.8 490.2 L610.3 482.6 L612.0 482.6 Z M628.4 466.6 L624.5 476.3 L626.3 476.3 L622.8 483.8 L625.6 483.8 L621.4 488.1 L635.4 488.1 L631.2 483.8 L634.0 483.8 L630.5 476.3 L632.2 476.3 Z M648.6 460.4 L644.7 470.0 L646.5 470.0 L643.0 477.4 L645.8 477.4 L641.6 481.7 L655.6 481.7 L651.4 477.4 L654.2 477.4 L650.7 470.0 L652.4 470.0 Z M668.8 454.2 L664.9 463.7 L666.6 463.7 L663.1 471.1 L666.0 471.1 L661.8 475.2 L675.8 475.2 L671.5 471.1 L674.4 471.1 L670.9 463.7 L672.6 463.7 Z M688.9 448.1 L685.1 457.4 L686.8 457.4 L683.3 464.7 L686.1 464.7 L681.9 468.8 L695.9 468.8 L691.7 464.7 L694.5 464.7 L691.0 457.4 L692.8 457.4 Z M709.1 441.9 L705.3 451.1 L707.0 451.1 L703.5 458.3 L706.3 458.3 L702.1 462.4 L716.1 462.4 L711.9 458.3 L714.7 458.3 L711.2 451.1 L713.0 451.1 Z M729.3 435.7 L725.5 444.8 L727.2 444.8 L723.7 451.9 L726.5 451.9 L722.3 455.9 L736.3 455.9 L732.1 451.9 L734.9 451.9 L731.4 444.8 L733.2 444.8 Z M749.5 429.5 L745.6 438.5 L747.4 438.5 L743.9 445.5 L746.7 445.5 L742.5 449.5 L756.5 449.5 L752.3 445.5 L755.1 445.5 L751.6 438.5 L753.4 438.5 Z M769.7 423.3 L765.8 432.2 L767.6 432.2 L764.1 439.1 L766.9 439.1 L762.7 443.1 L776.7 443.1 L772.5 439.1 L775.3 439.1 L771.8 432.2 L773.5 432.2 Z M789.9 417.1 L786.0 425.9 L787.8 425.9 L784.3 432.7 L787.1 432.7 L782.9 436.6 L796.9 436.6 L792.7 432.7 L795.5 432.7 L792.0 425.9 L793.7 425.9 Z M810.1 410.9 L806.2 419.6 L808.0 419.6 L804.5 426.3 L807.3 426.3 L803.1 430.2 L817.1 430.2 L812.9 426.3 L815.7 426.3 L812.2 419.6 L813.9 419.6 Z M830.2 404.8 L826.4 413.3 L828.1 413.3 L824.6 419.9 L827.5 419.9 L823.2 423.8 L837.2 423.8 L833.0 419.9 L835.9 419.9 L832.4 413.3 L834.1 413.3 Z M850.4 398.6 L846.6 407.0 L848.3 407.0 L844.8 413.6 L847.6 413.6 L843.4 417.3 L857.4 417.3 L853.2 413.6 L856.0 413.6 L852.5 407.0 L854.3 407.0 Z M870.6 392.4 L866.8 400.7 L868.5 400.7 L865.0 407.2 L867.8 407.2 L863.6 410.9 L877.6 410.9 L873.4 407.2 L876.2 407.2 L872.7 400.7 L874.5 400.7 Z M890.8 386.2 L887.0 394.4 L888.7 394.4 L885.2 400.8 L888.0 400.8 L883.8 404.4 L897.8 404.4 L893.6 400.8 L896.4 400.8 L892.9 394.4 L894.7 394.4 Z M911.0 380.0 L907.1 388.1 L908.9 388.1 L905.4 394.4 L908.2 394.4 L904.0 398.0 L918.0 398.0 L913.8 394.4 L916.6 394.4 L913.1 388.1 L914.9 388.1 Z"/></g>
<!-- front rail of back compartment -->
<g fill="none" stroke-linecap="round">
  <g stroke="#d8ac40" stroke-width="1.6"><path d="M842 262 V290 M862 252 V280 M882 241 V268 M902 230 V256 M922 218 V244 M940 208 V232"/></g>
  <path d="M824 272 L922 206 C930 200 940 196 950 196" stroke="#9a6620" stroke-width="5.5"/>
  <path d="M824 271 L922 205 C930 199 940 195 949 195" stroke="#c8963c" stroke-width="3"/>
</g>
<!-- wreath -->
<ellipse cx="905" cy="324" rx="34" ry="46" fill="none" stroke="#5a1010" stroke-width="16" opacity="0.45" filter="url(#b4)"/>
<ellipse cx="913" cy="314" rx="33" ry="45" fill="none" stroke="#1a5a1e" stroke-width="15"/>
<g stroke-width="1.8" stroke-linecap="round"><path d="M900.5 348.1 L896.6 344.5" stroke="#4cba3c"/><path d="M941.4 340.0 L935.7 341.4" stroke="#1e6a22"/><path d="M888.5 328.8 L882.4 326.1" stroke="#4cba3c"/><path d="M933.6 341.7 L926.2 346.4" stroke="#4cba3c"/><path d="M890.3 295.5 L890.5 288.3" stroke="#2a8a2a"/><path d="M906.1 350.8 L900.5 353.4" stroke="#2e7a2a"/><path d="M927.4 356.3 L921.0 357.5" stroke="#4cba3c"/><path d="M905.0 269.0 L912.0 268.9" stroke="#4cba3c"/><path d="M885.8 332.2 L883.8 325.7" stroke="#3aa83a"/><path d="M913.3 352.7 L908.6 350.1" stroke="#3aa83a"/><path d="M875.0 305.7 L878.4 300.6" stroke="#1e6a22"/><path d="M936.5 343.3 L931.2 345.3" stroke="#184e1c"/><path d="M878.0 339.6 L871.1 337.3" stroke="#3aa83a"/><path d="M896.5 349.5 L889.5 345.1" stroke="#1e6a22"/><path d="M934.1 268.6 L940.8 272.4" stroke="#1e6a22"/><path d="M909.4 273.1 L917.2 273.2" stroke="#184e1c"/><path d="M906.2 355.7 L901.8 353.2" stroke="#184e1c"/><path d="M891.7 351.2 L887.0 347.6" stroke="#3aa83a"/><path d="M933.2 343.0 L928.3 350.0" stroke="#1e6a22"/><path d="M928.8 351.2 L925.5 355.7" stroke="#184e1c"/><path d="M932.6 283.4 L938.0 286.8" stroke="#184e1c"/><path d="M940.0 304.0 L944.4 307.9" stroke="#2a8a2a"/><path d="M950.7 317.9 L953.6 323.3" stroke="#2a8a2a"/><path d="M885.8 334.7 L882.5 326.5" stroke="#2e7a2a"/><path d="M938.0 272.3 L942.6 278.8" stroke="#184e1c"/><path d="M942.9 284.2 L942.6 292.4" stroke="#184e1c"/><path d="M887.8 339.6 L883.7 334.5" stroke="#2a8a2a"/><path d="M939.2 330.1 L940.4 336.4" stroke="#1e6a22"/><path d="M940.2 341.8 L934.5 348.5" stroke="#4cba3c"/><path d="M950.9 322.4 L948.9 327.6" stroke="#3aa83a"/><path d="M946.1 301.0 L947.9 306.2" stroke="#184e1c"/><path d="M945.5 312.1 L945.9 317.4" stroke="#1e6a22"/><path d="M912.9 264.2 L920.7 263.9" stroke="#4cba3c"/><path d="M952.1 321.8 L951.0 327.3" stroke="#4cba3c"/><path d="M944.5 288.3 L950.5 292.9" stroke="#1e6a22"/><path d="M903.2 276.0 L908.0 272.9" stroke="#2a8a2a"/><path d="M876.7 303.7 L876.1 297.9" stroke="#2a8a2a"/><path d="M926.0 265.8 L930.2 270.0" stroke="#4cba3c"/><path d="M876.7 316.2 L882.7 310.8" stroke="#184e1c"/><path d="M910.9 362.7 L906.6 357.5" stroke="#2e7a2a"/><path d="M952.5 309.9 L954.3 315.5" stroke="#2a8a2a"/><path d="M882.9 321.8 L881.0 313.1" stroke="#4cba3c"/><path d="M930.6 276.4 L936.0 282.5" stroke="#1e6a22"/><path d="M926.9 281.7 L934.4 284.3" stroke="#2a8a2a"/><path d="M884.9 319.3 L887.3 313.4" stroke="#2e7a2a"/><path d="M888.0 340.2 L889.1 332.4" stroke="#2a8a2a"/><path d="M939.1 312.5 L938.3 319.3" stroke="#2e7a2a"/><path d="M935.9 354.9 L928.5 353.3" stroke="#3aa83a"/><path d="M931.8 352.2 L930.8 360.3" stroke="#2e7a2a"/><path d="M893.3 277.2 L900.0 278.2" stroke="#2a8a2a"/><path d="M926.3 279.1 L932.4 279.3" stroke="#2a8a2a"/><path d="M915.6 272.6 L923.8 274.0" stroke="#1e6a22"/><path d="M939.1 291.4 L943.5 297.3" stroke="#4cba3c"/><path d="M878.7 339.5 L875.3 333.2" stroke="#4cba3c"/><path d="M874.7 310.5 L878.6 304.2" stroke="#2a8a2a"/><path d="M928.3 353.3 L921.1 353.9" stroke="#3aa83a"/><path d="M899.2 272.5 L906.5 268.9" stroke="#4cba3c"/><path d="M939.7 327.6 L942.1 332.4" stroke="#184e1c"/><path d="M879.0 295.0 L885.1 292.1" stroke="#4cba3c"/><path d="M947.1 306.2 L951.0 310.8" stroke="#4cba3c"/><path d="M881.0 304.7 L887.6 300.6" stroke="#3aa83a"/><path d="M947.2 289.4 L953.0 292.9" stroke="#184e1c"/><path d="M936.2 344.3 L936.2 350.3" stroke="#1e6a22"/><path d="M920.0 354.0 L915.1 360.4" stroke="#2e7a2a"/><path d="M893.7 280.8 L896.2 275.8" stroke="#184e1c"/><path d="M920.5 367.0 L914.0 369.5" stroke="#2e7a2a"/><path d="M926.9 280.7 L933.4 283.4" stroke="#3aa83a"/><path d="M885.8 334.0 L879.7 331.8" stroke="#3aa83a"/><path d="M882.7 299.4 L879.5 293.9" stroke="#4cba3c"/><path d="M901.8 365.9 L893.9 369.4" stroke="#2a8a2a"/><path d="M939.8 307.4 L942.7 311.7" stroke="#2a8a2a"/><path d="M909.5 351.4 L900.8 351.5" stroke="#3aa83a"/><path d="M885.2 339.5 L881.4 333.6" stroke="#3aa83a"/><path d="M935.5 333.3 L930.2 337.5" stroke="#1e6a22"/><path d="M909.9 349.2 L905.0 352.7" stroke="#4cba3c"/><path d="M929.5 285.4 L931.2 292.0" stroke="#3aa83a"/><path d="M944.8 312.4 L939.9 318.1" stroke="#1e6a22"/><path d="M884.2 307.3 L881.3 302.4" stroke="#1e6a22"/><path d="M929.5 362.6 L922.5 364.0" stroke="#2a8a2a"/><path d="M904.8 357.6 L898.8 359.7" stroke="#1e6a22"/><path d="M939.3 312.8 L944.8 317.1" stroke="#2a8a2a"/><path d="M883.8 310.4 L883.8 302.8" stroke="#2e7a2a"/><path d="M883.0 332.6 L884.2 326.1" stroke="#4cba3c"/><path d="M902.7 350.8 L897.0 351.5" stroke="#2e7a2a"/><path d="M909.3 276.5 L915.9 282.5" stroke="#2a8a2a"/><path d="M947.7 318.2 L943.0 323.1" stroke="#1e6a22"/><path d="M945.7 340.2 L938.6 343.0" stroke="#3aa83a"/><path d="M883.9 285.6 L882.7 280.0" stroke="#3aa83a"/><path d="M885.1 327.5 L889.3 319.6" stroke="#4cba3c"/><path d="M901.3 346.0 L898.9 340.7" stroke="#2a8a2a"/><path d="M944.3 314.3 L944.6 321.3" stroke="#2a8a2a"/><path d="M913.4 364.5 L907.4 370.1" stroke="#2a8a2a"/><path d="M891.7 335.2 L885.5 334.7" stroke="#2a8a2a"/><path d="M947.2 341.4 L942.0 343.6" stroke="#2e7a2a"/><path d="M920.3 268.2 L926.4 273.2" stroke="#184e1c"/><path d="M934.4 353.9 L929.6 355.8" stroke="#2e7a2a"/><path d="M940.1 284.2 L942.2 292.1" stroke="#2a8a2a"/><path d="M943.9 287.2 L947.5 294.6" stroke="#1e6a22"/><path d="M928.8 272.6 L931.7 279.8" stroke="#2e7a2a"/><path d="M896.2 285.2 L896.7 277.7" stroke="#1e6a22"/><path d="M889.9 344.8 L884.9 344.9" stroke="#4cba3c"/><path d="M899.1 273.4 L901.1 265.4" stroke="#2e7a2a"/><path d="M948.3 292.2 L954.9 295.1" stroke="#2e7a2a"/><path d="M910.6 274.0 L914.6 269.5" stroke="#2e7a2a"/><path d="M914.2 274.4 L920.7 276.5" stroke="#184e1c"/><path d="M947.5 338.6 L947.0 343.8" stroke="#2e7a2a"/><path d="M896.2 285.4 L897.8 279.6" stroke="#2e7a2a"/><path d="M900.8 269.6 L904.4 263.7" stroke="#184e1c"/><path d="M908.8 362.1 L901.9 358.6" stroke="#3aa83a"/><path d="M905.4 274.6 L913.0 272.1" stroke="#4cba3c"/><path d="M925.5 365.7 L921.0 363.4" stroke="#184e1c"/><path d="M942.3 334.9 L933.6 336.6" stroke="#184e1c"/><path d="M922.9 366.1 L917.6 371.2" stroke="#2a8a2a"/><path d="M912.5 273.7 L919.7 271.8" stroke="#2e7a2a"/><path d="M874.4 311.1 L876.9 305.7" stroke="#184e1c"/><path d="M890.9 337.6 L892.0 330.0" stroke="#184e1c"/><path d="M904.1 349.9 L897.8 349.6" stroke="#3aa83a"/><path d="M949.6 314.5 L946.4 319.0" stroke="#2a8a2a"/><path d="M904.1 262.5 L909.4 258.8" stroke="#184e1c"/><path d="M883.4 347.3 L874.8 346.3" stroke="#3aa83a"/><path d="M931.2 281.8 L938.7 280.6" stroke="#2e7a2a"/><path d="M940.0 298.2 L945.2 303.0" stroke="#2a8a2a"/><path d="M918.4 263.9 L923.5 264.0" stroke="#2e7a2a"/><path d="M881.9 344.8 L878.9 339.8" stroke="#1e6a22"/><path d="M947.6 329.2 L945.9 337.0" stroke="#2e7a2a"/><path d="M935.4 281.3 L935.9 288.5" stroke="#2a8a2a"/><path d="M882.7 321.3 L878.7 314.5" stroke="#2e7a2a"/><path d="M910.7 362.0 L903.8 364.1" stroke="#184e1c"/><path d="M938.6 346.7 L938.7 353.7" stroke="#184e1c"/><path d="M882.3 300.3 L882.4 292.2" stroke="#184e1c"/><path d="M931.2 343.9 L930.4 350.2" stroke="#1e6a22"/><path d="M899.9 352.4 L896.7 347.6" stroke="#1e6a22"/><path d="M912.9 270.7 L919.9 269.6" stroke="#184e1c"/><path d="M908.4 363.6 L901.1 362.7" stroke="#3aa83a"/><path d="M936.2 346.0 L929.0 350.4" stroke="#2a8a2a"/><path d="M945.4 343.0 L942.6 350.1" stroke="#184e1c"/><path d="M949.5 299.2 L947.6 303.9" stroke="#1e6a22"/><path d="M880.2 336.7 L880.9 327.9" stroke="#184e1c"/><path d="M944.4 314.0 L938.6 320.0" stroke="#184e1c"/><path d="M941.9 307.1 L946.2 310.6" stroke="#4cba3c"/><path d="M939.9 307.5 L936.8 314.6" stroke="#184e1c"/><path d="M944.9 339.7 L946.8 344.8" stroke="#4cba3c"/><path d="M943.8 290.9 L947.9 294.5" stroke="#3aa83a"/><path d="M881.4 306.3 L884.7 302.0" stroke="#3aa83a"/><path d="M879.2 306.9 L878.9 301.0" stroke="#4cba3c"/><path d="M946.5 314.3 L941.8 318.1" stroke="#3aa83a"/><path d="M889.3 272.5 L893.8 268.7" stroke="#2a8a2a"/><path d="M944.2 321.9 L941.9 326.6" stroke="#2a8a2a"/><path d="M877.5 314.5 L876.5 308.6" stroke="#2e7a2a"/><path d="M885.3 333.4 L881.7 326.5" stroke="#2e7a2a"/><path d="M881.7 337.3 L874.6 333.1" stroke="#2e7a2a"/><path d="M928.0 283.9 L932.9 287.1" stroke="#2a8a2a"/><path d="M916.5 353.2 L910.7 351.1" stroke="#4cba3c"/><path d="M884.6 315.0 L881.2 309.3" stroke="#2e7a2a"/><path d="M945.2 330.3 L940.6 332.6" stroke="#1e6a22"/><path d="M940.4 307.9 L944.8 310.8" stroke="#184e1c"/><path d="M878.7 329.3 L875.4 325.0" stroke="#1e6a22"/><path d="M940.7 296.7 L948.1 301.4" stroke="#2e7a2a"/><path d="M883.4 322.3 L885.0 314.2" stroke="#3aa83a"/><path d="M887.4 327.2 L882.7 324.9" stroke="#184e1c"/><path d="M939.5 303.6 L936.4 308.6" stroke="#3aa83a"/><path d="M916.5 273.1 L920.8 276.4" stroke="#2e7a2a"/><path d="M882.3 321.0 L885.5 316.2" stroke="#3aa83a"/><path d="M910.4 269.6 L916.3 270.6" stroke="#2e7a2a"/><path d="M915.8 278.3 L919.7 274.8" stroke="#1e6a22"/><path d="M911.4 363.8 L906.8 359.5" stroke="#3aa83a"/><path d="M892.9 360.5 L885.2 362.7" stroke="#2e7a2a"/><path d="M900.9 351.1 L893.8 354.7" stroke="#2e7a2a"/><path d="M938.2 302.0 L936.8 307.3" stroke="#2e7a2a"/><path d="M951.1 299.5 L953.9 304.9" stroke="#184e1c"/></g>
<circle cx="902.3" cy="271.4" r="3.2" fill="#d42020"/><circle cx="940.2" cy="288.6" r="3.2" fill="#d42020"/><circle cx="944.5" cy="327.3" r="3.2" fill="#d42020"/><circle cx="928.0" cy="354.1" r="3.2" fill="#d42020"/><circle cx="899.3" cy="354.9" r="3.2" fill="#d42020"/><circle cx="881.0" cy="324.8" r="3.2" fill="#d42020"/><circle cx="925.0" cy="272.1" r="2.6" fill="#a08040"/><circle cx="945.8" cy="309.5" r="2.6" fill="#a08040"/><circle cx="938.2" cy="343.0" r="2.6" fill="#a08040"/><circle cx="912.0" cy="359.0" r="2.6" fill="#a08040"/><circle cx="886.6" cy="340.9" r="2.6" fill="#a08040"/><circle cx="883.4" cy="294.1" r="2.6" fill="#a08040"/>
<!-- ===== bow ===== -->
<g stroke-linecap="round" stroke-linejoin="round">
  <path d="M735 372 C740 392 760 400 785 396" stroke="#4a0a0a" stroke-width="12" fill="none" opacity="0.35" filter="url(#b2)"/>
  <path d="M742 364 L726 402 L716 424 L727 417 L735 425 L750 372 Z" fill="#c01c1c" stroke="#e0a040" stroke-width="0.7"/>
  <path d="M746 364 L770 386 L780 398 L784 390 L772 372 Z" fill="#b01818" stroke="#e0a040" stroke-width="0.7"/>
  <g fill="none">
    <path d="M743 361 C728 348 712 344 710 350 C710 358 726 366 743 364" stroke="#7a1010" stroke-width="7"/>
    <path d="M743 361 C728 348 712 344 710 350 C710 358 726 366 743 364" stroke="#d42626" stroke-width="5"/>
    <path d="M745 360 C750 340 764 324 776 328 C784 334 770 352 746 362" stroke="#7a1010" stroke-width="7"/>
    <path d="M745 360 C750 340 764 324 776 328 C784 334 770 352 746 362" stroke="#dc2c2c" stroke-width="5"/>
    <path d="M746 362 C762 352 782 352 786 362 C784 372 764 372 746 364" stroke="#7a1010" stroke-width="7"/>
    <path d="M746 362 C762 352 782 352 786 362 C784 372 764 372 746 364" stroke="#cc2424" stroke-width="5"/>
    <path d="M744 364 C734 376 728 392 736 398 C746 400 752 380 746 364" stroke="#7a1010" stroke-width="7"/>
    <path d="M744 364 C734 376 728 392 736 398 C746 400 752 380 746 364" stroke="#c82222" stroke-width="5"/>
    <path d="M746 358 C748 342 752 330 758 324 C764 322 762 340 748 360" stroke="#7a1010" stroke-width="6"/>
    <path d="M746 358 C748 342 752 330 758 324 C764 322 762 340 748 360" stroke="#e03232" stroke-width="4"/>
    <path d="M714 349 C722 347 732 352 740 358" stroke="#f26060" stroke-width="1.5"/>
    <path d="M766 329 C772 327 776 330 774 334" stroke="#f26060" stroke-width="1.5"/>
  </g>
  <ellipse cx="745" cy="362" rx="5" ry="4.5" fill="#e03434" stroke="#8a1010" stroke-width="0.8"/>
</g>
<!-- ===== front runner + plank ===== -->
<g fill="none" stroke-linecap="round" stroke-linejoin="round">
  <path d="M574 577 L876 490" stroke="#a06c24" stroke-width="4.5"/>
  <g stroke="#5a3e14" stroke-width="2">
    <path d="M580 528 L625 562 M641 516 L690 556 M716 496 L764 535 M786 478 L830 514 M840 462 L870 495"/>
  </g>
  <g stroke="#a87830" stroke-width="3">
    <path d="M632 523 L644 567 M708 502 L718 545 M777 482 L785 526 M838 466 L848 508"/>
  </g>
  <g stroke="#c49040" stroke-width="1.5">
    <path d="M640 525 C650 545 660 560 652 568 C645 570 640 560 644 552 M716 504 C726 524 735 538 728 546 M784 484 C794 504 802 518 796 526 M845 468 C855 486 862 498 856 506"/>
  </g>
  <path d="M537 449 C520 462 502 488 500 515 C500 540 520 575 553 587 C568 590 584 588 600 584 L919 485 C932 480 937 470 936 458 C934 445 925 438 914 438 C905 440 898 445 894 451" stroke="#6a4414" stroke-width="8"/>
  <path d="M536 450 C519 463 503 488 501 514 C501 538 520 572 553 585 C568 588 584 586 600 582 L918 483 C930 478 935 469 934 458" stroke="#d8ac5c" stroke-width="5.5"/>
  <path d="M532 461 C520 478 516 505 525 518 C535 530 560 528 586 522" stroke="#b8842e" stroke-width="3.5"/>
</g>
<path d="M586 517 L872 437 L882 450 L604 531 Z" fill="#c82626"/>
<path d="M604 531 L882 450 L882 454 L605 535 Z" fill="#6a1010"/>
<g fill="none" stroke="#c8962e" stroke-width="2.5"><ellipse cx="652" cy="512" rx="4" ry="5"/><ellipse cx="724" cy="492" rx="4" ry="5"/><ellipse cx="790" cy="474" rx="4" ry="5"/><ellipse cx="849" cy="457" rx="4" ry="5"/></g>
<g fill="#c8962e"><ellipse cx="625" cy="502" rx="4" ry="2"/><ellipse cx="697" cy="482" rx="4" ry="2"/><ellipse cx="763" cy="464" rx="4" ry="2"/><ellipse cx="822" cy="446" rx="4" ry="2"/></g>
</svg>



  <!-- viewer bottom bar -->
  <div class="a" style="left:116px;top:673px;width:1150px;height:1px;background:#222"></div>
  <div class="a" style="left:116px;top:674px;width:1150px;height:21px;background:#333"></div>
  <div class="a" style="left:120px;top:679px;width:13px;height:11px;border:1px solid #a8a8a8;border-radius:1px"></div>
  <div class="a" style="left:123px;top:682px;width:7px;height:5px;border:1px solid #777"></div>
  <div class="dd" style="left:137px;top:677px;width:60px;height:15px"><div class="sp"></div><div class="ar"></div></div>
  <div class="t" style="left:144px;top:679px;color:#b4b4b4">50%</div>
  <div class="a" style="left:201px;top:681px;width:13px;height:10px;border:1px dashed #cfcfcf"></div>
  <div class="a" style="left:218px;top:677px;width:18px;height:15px;background:#111"></div>
  <div class="a" style="left:221px;top:680px;width:12px;height:9px;border:1px dashed #ddd;border-radius:3px"></div>
  <div class="dd" style="left:238px;top:677px;width:60px;height:15px;background:#2b2b2b"></div>
  <div class="t" style="left:244px;top:679px;color:#b8b8c0">0:00:00:00</div>
  <svg style="left:302px;top:680px" width="13" height="10" viewBox="0 0 13 10">
    <rect x="0" y="1.5" width="13" height="8.5" rx="1" fill="#d8d8d8"/><rect x="1.5" y="0" width="3" height="2" fill="#d8d8d8"/>
    <circle cx="6.5" cy="5.8" r="2.6" fill="#333"/><circle cx="6.5" cy="5.8" r="1.4" fill="#aaa"/>
  </svg>
  <svg style="left:323px;top:679px" width="10" height="11" viewBox="0 0 10 11">
    <circle cx="5" cy="2.8" r="2.5" fill="#6a6a6a"/><path d="M0.5 11 V8 Q0.5 5.5 5 5.5 Q9.5 5.5 9.5 8 V11 Z" fill="#6a6a6a"/>
  </svg>
  <svg style="left:341px;top:680px" width="13" height="12" viewBox="0 0 13 12">
    <circle cx="6.5" cy="3.5" r="3.2" fill="#d23030"/><circle cx="4" cy="7.5" r="3.2" fill="#2fa23a"/><circle cx="9" cy="7.5" r="3.2" fill="#5a5ae0"/>
  </svg>
  <div class="dd" style="left:358px;top:677px;width:75px;height:15px"><div class="sp"></div><div class="ar"></div></div>
  <div class="t" style="left:364px;top:679px;color:#b4b4b4">Full</div>
  <div class="a" style="left:437px;top:680px;width:12px;height:10px;background:#cfcfcf;border-radius:1px"></div>
  <div class="a" style="left:442px;top:683px;width:6px;height:4px;background:#333;border-radius:2px"></div>
  <div class="a" style="left:456px;top:680px;width:12px;height:10px;background-color:#eee;background-image:linear-gradient(45deg,#222 25%,transparent 25%,transparent 75%,#222 75%),linear-gradient(45deg,#222 25%,transparent 25%,transparent 75%,#222 75%);background-size:3px 3px;background-position:0 0,1.5px 1.5px"></div>
  <div class="dd" style="left:474px;top:677px;width:91px;height:15px"><div class="sp"></div><div class="ar"></div></div>
  <div class="t" style="left:479px;top:679px;color:#b4b4b4;font-size:9.7px">Active Camera</div>
  <div class="dd" style="left:570px;top:677px;width:59px;height:15px"><div class="sp"></div><div class="ar"></div></div>
  <div class="t" style="left:575px;top:679px;color:#b4b4b4">1 View</div>
  <svg style="left:634px;top:679px" width="12" height="11" viewBox="0 0 12 11">
    <rect x="0.5" y="2.5" width="11" height="8" fill="#bbb"/><path d="M0.5 0.5 V2.5 M11.5 0.5 V2.5" stroke="#bbb"/><rect x="0.5" y="1" width="11" height="1" fill="#bbb"/>
  </svg>
  <div class="a" style="left:650px;top:677px;width:17px;height:15px;background:#111"></div>
  <svg style="left:652px;top:679px" width="13" height="12" viewBox="0 0 13 12">
    <rect x="0.5" y="0.5" width="11" height="9" fill="none" stroke="#ccc"/><path d="M7 1.5 L3.5 6 H6 L4.5 9 L8.5 4.5 H6 Z" fill="#eee"/><path d="M11 11 L13 9 V11 Z" fill="#ccc"/>
  </svg>
  <svg style="left:672px;top:679px" width="12" height="11" viewBox="0 0 12 11">
    <rect x="0.5" y="1.5" width="11" height="9" fill="none" stroke="#bbb" stroke-width="1.2"/><path d="M3 3 V9 M6 1.5 V9 M9 3 V9" stroke="#bbb" stroke-width="1.2"/>
  </svg>
  <svg style="left:691px;top:679px" width="13" height="12" viewBox="0 0 13 12">
    <rect x="4.5" y="0" width="4" height="3.5" fill="#ccc"/><rect x="0" y="8" width="4" height="3.5" fill="#ccc"/><rect x="9" y="8" width="4" height="3.5" fill="#ccc"/><path d="M6.5 3.5 V6 M2 8 V6 H11 V8" stroke="#ccc"/>
  </svg>
  <div class="sep" style="left:707px;top:677px;height:15px"></div>
  <svg style="left:711px;top:679px" width="13" height="12" viewBox="0 0 13 12"><path d="M8.00 6.00 Q10.45 8.16 12.87 7.29 L7.59 7.91 Z M7.25 7.30 Q6.61 10.50 8.57 12.16 L5.39 7.90 Z M5.75 7.30 Q2.66 8.34 2.20 10.87 L4.30 5.99 Z M5.00 6.00 Q2.55 3.84 0.13 4.71 L5.41 4.09 Z M5.75 4.70 Q6.39 1.50 4.43 -0.16 L7.61 4.10 Z M7.25 4.70 Q10.34 3.66 10.80 1.13 L8.70 6.01 Z" fill="#e4e4e4"/></svg>
  <div class="t" style="left:731px;top:679px;color:#d8a428">+0.0</div>
  <div class="a" style="left:731px;top:690px;width:21px;height:1px;background:repeating-linear-gradient(90deg,#a07a20 0 1px,transparent 1px 2px)"></div>

  <!-- ===== timeline ===== -->
  <div class="a" style="left:14px;top:695px;width:1252px;height:3px;background:#080808"></div>
  <div class="a" style="left:14px;top:698px;width:1252px;height:18px;background:linear-gradient(#2b2b2b,#1c1c1c)"></div>
  <div class="a" style="left:14px;top:716px;width:1252px;height:1px;background:#a87f1c"></div>
  <div class="a" style="left:14px;top:717px;width:1252px;height:169px;background:#303030"></div>
  <div class="a" style="left:14px;top:724px;width:155px;height:16px;background:#a3a3a3;border:1px solid #161616;border-left:none"></div>
  <svg style="left:178px;top:726px" width="24" height="13" viewBox="0 0 24 13">
  <g fill="#cfcfcf"><rect x="0" y="0.5" width="3.5" height="2.5"/><rect x="0" y="4.8" width="3.5" height="2.5"/><rect x="0" y="9" width="3.5" height="2.5"/>
  <rect x="16" y="0.5" width="3.5" height="2.5"/><rect x="16" y="4.8" width="3.5" height="2.5"/><rect x="16" y="9" width="3.5" height="2.5"/>
  <rect x="8" y="4.8" width="4" height="2.5"/></g>
  <path d="M3.5 1.8 L8 6 L3.5 10.2 M12 6 L16 1.8 M12 6 L16 10.2 M3.5 6 H16" stroke="#bbb" stroke-width="1" fill="none"/>
  <path d="M21 11 L24 11 L22.5 13 Z" fill="#ccc"/>
</svg>
  <svg style="left:210px;top:724px" width="19" height="15" viewBox="0 0 19 15">
  <g stroke="#eee" stroke-width="1"><path d="M4 0 V8 M0 4 H8 M1.2 1.2 L6.8 6.8 M6.8 1.2 L1.2 6.8"/></g>
  <circle cx="4" cy="4" r="2" fill="#fff"/>
  <path d="M12 4.5 L18 7 V12.5 L12 15 L6.5 12.5 V7 Z" fill="#a8a8a8"/><path d="M6.5 7 L12 9.5 L18 7 L12 4.5 Z" fill="#d8d8d8"/><path d="M12 9.5 V15 L18 12.5 V7 Z" fill="#8a8a8a"/>
</svg>
  <svg style="left:241px;top:725px" width="18" height="14" viewBox="0 0 18 14">
  <rect x="0" y="8" width="17" height="6" fill="#8a8a8a"/><rect x="0" y="8" width="17" height="2" fill="#aaa"/>
  <path d="M3 8 C3 2 14 2 14 8 Z" fill="#e4e4e4"/><rect x="7.5" y="4.5" width="2" height="6" fill="#333"/><rect x="6" y="4" width="5" height="2" fill="#333"/>
</svg>
  <svg style="left:264px;top:725px" width="18" height="14" viewBox="0 0 18 14">
  <g fill="#9a9a9a"><path d="M0 4 L6 2 V13 L0 14 Z"/><path d="M6 2 L12 1 V13 L6 13 Z" fill="#b4b4b4"/><path d="M12 0 L18 0 V12 L12 13 Z" fill="#a8a8a8"/></g>
  <g fill="#444"><rect x="1" y="5" width="1" height="1"/><rect x="1" y="8" width="1" height="1"/><rect x="1" y="11" width="1" height="1"/><rect x="13" y="2" width="1" height="1"/><rect x="13" y="5" width="1" height="1"/><rect x="13" y="8" width="1" height="1"/><rect x="14" y="3" width="3" height="7" fill="#666"/></g>
</svg>
  <svg style="left:287px;top:725px" width="17" height="16" viewBox="0 0 17 16">
  <ellipse cx="7" cy="11" rx="6" ry="4.5" fill="#6a6a6a" transform="rotate(-40 7 11)"/>
  <ellipse cx="8.5" cy="8.5" rx="6" ry="4.5" fill="#8a8a8a" transform="rotate(-40 8.5 8.5)"/>
  <ellipse cx="10" cy="6" rx="6" ry="4.5" fill="#bcbcbc" transform="rotate(-40 10 6)"/>
</svg>
  <svg style="left:317px;top:725px" width="18" height="16" viewBox="0 0 18 16">
  <ellipse cx="10" cy="6.5" rx="7.5" ry="6" fill="#bdbdbd"/><circle cx="3" cy="14" r="1.5" fill="#bbb"/><circle cx="5.5" cy="12" r="1.2" fill="#bbb"/>
  <circle cx="10" cy="5.5" r="2.6" fill="#fff"/><path d="M9 7.5 H11 V10 H9 Z" fill="#555"/>
</svg>
  <svg style="left:341px;top:725px" width="14" height="15" viewBox="0 0 14 15">
  <circle cx="7" cy="9" r="5.5" fill="#777" stroke="#c8c8c8" stroke-width="1.6"/><rect x="5" y="0.5" width="5" height="1.6" fill="#ccc"/><path d="M1.5 2 L3 5 L0.5 5 Z" fill="#ccc"/>
</svg>
  <svg style="left:363px;top:725px" width="19" height="14" viewBox="0 0 19 14">
  <rect x="1" y="2" width="17" height="10" fill="none" stroke="#bbb" stroke-dasharray="1 1"/><rect x="9" y="0.5" width="9" height="3" fill="#777"/>
  <path d="M1 3 C5 3 6 11 11 11 C14 11 15 6 18 4" stroke="#ddd" stroke-width="1.5" fill="none"/>
</svg>
  <div class="a" style="left:394px;top:721px;width:872px;height:1px;background:#111"></div>
  <div class="a" style="left:394px;top:722px;width:872px;height:7px;background:#8a8a8a"></div>
  <div class="a" style="left:394px;top:729px;width:872px;height:1px;background:#141414"></div>
  <div class="a" style="left:394px;top:730px;width:872px;height:17px;background:#2e2e2e"></div>
  <div class="a" style="left:395px;top:722px;width:5px;height:7px;background:#d8b020;border-radius:4px 0 0 0"></div>
  <div class="t" style="left:464.3px;top:733px;width:18px;text-align:center;color:#b8b8b8;font-size:9.5px">05s</div>
  <div class="a" style="left:473.3px;top:744px;width:1px;height:3px;background:#aaa"></div>
  <div class="t" style="left:537.6px;top:733px;width:18px;text-align:center;color:#b8b8b8;font-size:9.5px">10s</div>
  <div class="a" style="left:546.6px;top:744px;width:1px;height:3px;background:#aaa"></div>
  <div class="t" style="left:610.9px;top:733px;width:18px;text-align:center;color:#b8b8b8;font-size:9.5px">15s</div>
  <div class="a" style="left:619.9px;top:744px;width:1px;height:3px;background:#aaa"></div>
  <div class="t" style="left:684.2px;top:733px;width:18px;text-align:center;color:#b8b8b8;font-size:9.5px">20s</div>
  <div class="a" style="left:693.2px;top:744px;width:1px;height:3px;background:#aaa"></div>
  <div class="t" style="left:757.5px;top:733px;width:18px;text-align:center;color:#b8b8b8;font-size:9.5px">25s</div>
  <div class="a" style="left:766.5px;top:744px;width:1px;height:3px;background:#aaa"></div>
  <div class="t" style="left:830.8px;top:733px;width:18px;text-align:center;color:#b8b8b8;font-size:9.5px">30s</div>
  <div class="a" style="left:839.8px;top:744px;width:1px;height:3px;background:#aaa"></div>
  <div class="t" style="left:904.1px;top:733px;width:18px;text-align:center;color:#b8b8b8;font-size:9.5px">35s</div>
  <div class="a" style="left:913.1px;top:744px;width:1px;height:3px;background:#aaa"></div>
  <div class="t" style="left:977.4px;top:733px;width:18px;text-align:center;color:#b8b8b8;font-size:9.5px">40s</div>
  <div class="a" style="left:986.4px;top:744px;width:1px;height:3px;background:#aaa"></div>
  <div class="t" style="left:1050.7px;top:733px;width:18px;text-align:center;color:#b8b8b8;font-size:9.5px">45s</div>
  <div class="a" style="left:1059.7px;top:744px;width:1px;height:3px;background:#aaa"></div>
  <div class="t" style="left:1124.0px;top:733px;width:18px;text-align:center;color:#b8b8b8;font-size:9.5px">50s</div>
  <div class="a" style="left:1133.0px;top:744px;width:1px;height:3px;background:#aaa"></div>
  <div class="t" style="left:1197.3px;top:733px;width:18px;text-align:center;color:#b8b8b8;font-size:9.5px">55s</div>
  <div class="a" style="left:1206.3px;top:744px;width:1px;height:3px;background:#aaa"></div>
  <div class="t" style="left:394px;top:733px;color:#b8b8b8;font-size:9.5px">00s</div>
  <div class="a" style="left:14px;top:747px;width:380px;height:2px;background:#0e0e0e"></div>
  <div class="a" style="left:14px;top:749px;width:380px;height:15px;background:linear-gradient(#3e3e3e,#373737)"></div>
  <div class="a" style="left:155px;top:752px;width:1px;height:10px;background:#181818"></div>
  <div class="a" style="left:276px;top:752px;width:1px;height:10px;background:#181818"></div>
  <div class="a" style="left:379px;top:752px;width:1px;height:10px;background:#181818"></div>
  <div class="t" style="left:281px;top:752px;color:#a8a8a8;font-size:8px">Parent</div>
  <div class="a" style="left:394px;top:747px;width:872px;height:1px;background:#141414"></div>
  <div class="a" style="left:394px;top:748px;width:872px;height:13px;background:#6a6a6a"></div>
  <div class="a" style="left:395px;top:749px;width:4px;height:11px;background:#d8b020"></div>
  <div class="a" style="left:14px;top:764px;width:1252px;height:1px;background:#0c0c0c"></div>
  <div class="a" style="left:394px;top:761px;width:872px;height:4px;background:#151515"></div>
  <div class="a" style="left:394px;top:762px;width:872px;height:1px;background:#3a3a3a"></div>
  <svg style="left:160px;top:753px" width="11" height="9" viewBox="0 0 11 9"><path d="M0 3.5 H2.5 M8.5 3.5 H11" stroke="#ccc" stroke-width="1.2"/><path d="M3 1.5 C3 0 8 0 8 1.5 L5.5 5 Z" fill="#eee"/><rect x="3" y="2.5" width="5" height="1.2" fill="#eee"/></svg>
  <svg style="left:174px;top:752px" width="90" height="10" viewBox="0 0 90 10">
  <g stroke="#ddd" stroke-width="1"><path d="M4 0.5 V8.5 M0 4.5 H8 M1.3 1.8 L6.7 7.2 M6.7 1.8 L1.3 7.2"/></g><circle cx="4" cy="4.5" r="2.2" fill="#333" stroke="#ddd"/>
  <path d="M14 1 L22 9" stroke="#ddd" stroke-width="1.5" stroke-dasharray="1.2 0.8"/>
  <text x="26" y="8.5" font-family="Liberation Serif" font-style="italic" font-size="11" fill="#ccc">fx</text>
  <rect x="39" y="0" width="11" height="10" fill="#aaa"/><rect x="42" y="1.5" width="5" height="7" fill="#222"/><g fill="#333"><rect x="40" y="1" width="1" height="1"/><rect x="40" y="4" width="1" height="1"/><rect x="40" y="7" width="1" height="1"/><rect x="48" y="1" width="1" height="1"/><rect x="48" y="4" width="1" height="1"/><rect x="48" y="7" width="1" height="1"/></g>
  <ellipse cx="56" cy="6.5" rx="4.5" ry="3" fill="#777" transform="rotate(-35 56 6.5)"/><ellipse cx="58" cy="4" rx="4.5" ry="3" fill="#aaa" transform="rotate(-35 58 4)"/>
  <circle cx="71" cy="5" r="4.8" fill="#ccc"/><path d="M67.6 8.4 A4.8 4.8 0 0 1 74.4 1.6 Z" fill="#111"/>
  <path d="M84 0 L89 2.5 V7.5 L84 10 L79 7.5 V2.5 Z" fill="#999"/><path d="M79 2.5 L84 5 L89 2.5 L84 0 Z" fill="#ddd"/><path d="M84 5 V10 L89 7.5 V2.5 Z" fill="#777"/>
</svg>
  <div class="a" style="left:14px;top:765px;width:380px;height:15px;background:#2b2b2b;border-bottom:1px solid #343434"></div>
  <div class="a" style="left:394px;top:765px;width:7px;height:15px;background:#2e2e2e"></div><div class="a" style="left:401px;top:765px;width:865px;height:15px;background:#4a3e34"></div>
  <div class="a" style="left:401px;top:766px;width:865px;height:13px;background:#9c846e"></div>
  <svg style="left:160px;top:770px" width="11" height="9" viewBox="0 0 11 9"><path d="M0 3.5 H2.5 M8.5 3.5 H11" stroke="#ccc" stroke-width="1.2"/><path d="M3 1.5 C3 0 8 0 8 1.5 L5.5 5 Z" fill="#eee"/><rect x="3" y="2.5" width="5" height="1.2" fill="#eee"/><rect x="0" y="7.5" width="11" height="1.2" fill="#7a7a7a"/></svg>
  <svg style="left:281px;top:768px" width="11" height="11" viewBox="0 0 11 11"><path d="M4.60 5.50 L4.54 5.38 L4.50 5.24 L4.48 5.10 L4.48 4.94 L4.51 4.78 L4.56 4.62 L4.64 4.46 L4.74 4.30 L4.87 4.16 L5.02 4.03 L5.20 3.91 L5.39 3.82 L5.61 3.76 L5.84 3.72 L6.08 3.72 L6.33 3.74 L6.57 3.81 L6.82 3.91 L7.06 4.04 L7.28 4.21 L7.48 4.41 L7.67 4.64 L7.82 4.90 L7.94 5.19 L8.03 5.50 L8.07 5.82 L8.07 6.16 L8.03 6.50 L7.94 6.84 L7.81 7.18 L7.62 7.50 L7.40 7.80 L7.13 8.07 L6.82 8.31 L6.48 8.52 L6.11 8.68 L5.71 8.80 L5.29 8.86 L4.86 8.87 L4.42 8.83 L3.98 8.73 L3.55 8.56 L3.14 8.35 L2.76 8.07 L2.41 7.75 L2.09 7.37 L1.82 6.96 L1.61 6.50 L1.45 6.01 L1.35 5.50 L1.32 4.97 L1.35 4.44 L1.46 3.90 L1.64 3.38 L1.88 2.87 L2.19 2.39 L2.56 1.95 L3.00 1.56 L3.48 1.22 L4.02 0.93" stroke="#dadada" stroke-width="1.3" fill="none"/></svg>
  <div class="dd" style="left:297px;top:766px;width:79px;height:13px;background:linear-gradient(#3a3a3a,#2e2e2e)"><div class="sp"></div><div class="ar"></div></div>
  <div class="t" style="left:303px;top:768px;color:#b4b4b4">None</div>
  <div class="a" style="left:14px;top:780px;width:380px;height:15px;background:#2b2b2b;border-bottom:1px solid #343434"></div>
  <div class="a" style="left:394px;top:780px;width:7px;height:15px;background:#2e2e2e"></div><div class="a" style="left:401px;top:780px;width:865px;height:15px;background:#4a3e34"></div>
  <div class="a" style="left:401px;top:781px;width:865px;height:13px;background:#9c846e"></div>
  <svg style="left:160px;top:785px" width="11" height="9" viewBox="0 0 11 9"><path d="M0 3.5 H2.5 M8.5 3.5 H11" stroke="#ccc" stroke-width="1.2"/><path d="M3 1.5 C3 0 8 0 8 1.5 L5.5 5 Z" fill="#eee"/><rect x="3" y="2.5" width="5" height="1.2" fill="#eee"/><rect x="0" y="7.5" width="11" height="1.2" fill="#7a7a7a"/></svg>
  <svg style="left:281px;top:783px" width="11" height="11" viewBox="0 0 11 11"><path d="M4.60 5.50 L4.54 5.38 L4.50 5.24 L4.48 5.10 L4.48 4.94 L4.51 4.78 L4.56 4.62 L4.64 4.46 L4.74 4.30 L4.87 4.16 L5.02 4.03 L5.20 3.91 L5.39 3.82 L5.61 3.76 L5.84 3.72 L6.08 3.72 L6.33 3.74 L6.57 3.81 L6.82 3.91 L7.06 4.04 L7.28 4.21 L7.48 4.41 L7.67 4.64 L7.82 4.90 L7.94 5.19 L8.03 5.50 L8.07 5.82 L8.07 6.16 L8.03 6.50 L7.94 6.84 L7.81 7.18 L7.62 7.50 L7.40 7.80 L7.13 8.07 L6.82 8.31 L6.48 8.52 L6.11 8.68 L5.71 8.80 L5.29 8.86 L4.86 8.87 L4.42 8.83 L3.98 8.73 L3.55 8.56 L3.14 8.35 L2.76 8.07 L2.41 7.75 L2.09 7.37 L1.82 6.96 L1.61 6.50 L1.45 6.01 L1.35 5.50 L1.32 4.97 L1.35 4.44 L1.46 3.90 L1.64 3.38 L1.88 2.87 L2.19 2.39 L2.56 1.95 L3.00 1.56 L3.48 1.22 L4.02 0.93" stroke="#dadada" stroke-width="1.3" fill="none"/></svg>
  <div class="dd" style="left:297px;top:781px;width:79px;height:13px;background:linear-gradient(#3a3a3a,#2e2e2e)"><div class="sp"></div><div class="ar"></div></div>
  <div class="t" style="left:303px;top:783px;color:#b4b4b4">None</div>
  <div class="a" style="left:14px;top:795px;width:380px;height:15px;background:#2b2b2b;border-bottom:1px solid #343434"></div>
  <div class="a" style="left:394px;top:795px;width:7px;height:15px;background:#2e2e2e"></div><div class="a" style="left:401px;top:795px;width:865px;height:15px;background:#4a3e34"></div>
  <div class="a" style="left:401px;top:796px;width:865px;height:13px;background:#9c846e"></div>
  <svg style="left:160px;top:800px" width="11" height="9" viewBox="0 0 11 9"><path d="M0 3.5 H2.5 M8.5 3.5 H11" stroke="#ccc" stroke-width="1.2"/><path d="M3 1.5 C3 0 8 0 8 1.5 L5.5 5 Z" fill="#eee"/><rect x="3" y="2.5" width="5" height="1.2" fill="#eee"/><rect x="0" y="7.5" width="11" height="1.2" fill="#7a7a7a"/></svg>
  <svg style="left:281px;top:798px" width="11" height="11" viewBox="0 0 11 11"><path d="M4.60 5.50 L4.54 5.38 L4.50 5.24 L4.48 5.10 L4.48 4.94 L4.51 4.78 L4.56 4.62 L4.64 4.46 L4.74 4.30 L4.87 4.16 L5.02 4.03 L5.20 3.91 L5.39 3.82 L5.61 3.76 L5.84 3.72 L6.08 3.72 L6.33 3.74 L6.57 3.81 L6.82 3.91 L7.06 4.04 L7.28 4.21 L7.48 4.41 L7.67 4.64 L7.82 4.90 L7.94 5.19 L8.03 5.50 L8.07 5.82 L8.07 6.16 L8.03 6.50 L7.94 6.84 L7.81 7.18 L7.62 7.50 L7.40 7.80 L7.13 8.07 L6.82 8.31 L6.48 8.52 L6.11 8.68 L5.71 8.80 L5.29 8.86 L4.86 8.87 L4.42 8.83 L3.98 8.73 L3.55 8.56 L3.14 8.35 L2.76 8.07 L2.41 7.75 L2.09 7.37 L1.82 6.96 L1.61 6.50 L1.45 6.01 L1.35 5.50 L1.32 4.97 L1.35 4.44 L1.46 3.90 L1.64 3.38 L1.88 2.87 L2.19 2.39 L2.56 1.95 L3.00 1.56 L3.48 1.22 L4.02 0.93" stroke="#dadada" stroke-width="1.3" fill="none"/></svg>
  <div class="dd" style="left:297px;top:796px;width:79px;height:13px;background:linear-gradient(#3a3a3a,#2e2e2e)"><div class="sp"></div><div class="ar"></div></div>
  <div class="t" style="left:303px;top:798px;color:#b4b4b4">None</div>
  <div class="a" style="left:14px;top:810px;width:380px;height:15px;background:#2b2b2b;border-bottom:1px solid #343434"></div>
  <div class="a" style="left:394px;top:810px;width:7px;height:15px;background:#2e2e2e"></div><div class="a" style="left:401px;top:810px;width:865px;height:15px;background:#3e2222"></div>
  <div class="a" style="left:401px;top:811px;width:865px;height:13px;background:#7c3434"></div>
  <svg style="left:160px;top:815px" width="11" height="9" viewBox="0 0 11 9"><path d="M0 3.5 H2.5 M8.5 3.5 H11" stroke="#ccc" stroke-width="1.2"/><path d="M3 1.5 C3 0 8 0 8 1.5 L5.5 5 Z" fill="#eee"/><rect x="3" y="2.5" width="5" height="1.2" fill="#eee"/><rect x="0" y="7.5" width="11" height="1.2" fill="#7a7a7a"/></svg>
  <svg style="left:281px;top:813px" width="11" height="11" viewBox="0 0 11 11"><path d="M4.60 5.50 L4.54 5.38 L4.50 5.24 L4.48 5.10 L4.48 4.94 L4.51 4.78 L4.56 4.62 L4.64 4.46 L4.74 4.30 L4.87 4.16 L5.02 4.03 L5.20 3.91 L5.39 3.82 L5.61 3.76 L5.84 3.72 L6.08 3.72 L6.33 3.74 L6.57 3.81 L6.82 3.91 L7.06 4.04 L7.28 4.21 L7.48 4.41 L7.67 4.64 L7.82 4.90 L7.94 5.19 L8.03 5.50 L8.07 5.82 L8.07 6.16 L8.03 6.50 L7.94 6.84 L7.81 7.18 L7.62 7.50 L7.40 7.80 L7.13 8.07 L6.82 8.31 L6.48 8.52 L6.11 8.68 L5.71 8.80 L5.29 8.86 L4.86 8.87 L4.42 8.83 L3.98 8.73 L3.55 8.56 L3.14 8.35 L2.76 8.07 L2.41 7.75 L2.09 7.37 L1.82 6.96 L1.61 6.50 L1.45 6.01 L1.35 5.50 L1.32 4.97 L1.35 4.44 L1.46 3.90 L1.64 3.38 L1.88 2.87 L2.19 2.39 L2.56 1.95 L3.00 1.56 L3.48 1.22 L4.02 0.93" stroke="#dadada" stroke-width="1.3" fill="none"/></svg>
  <div class="dd" style="left:297px;top:811px;width:79px;height:13px;background:linear-gradient(#3a3a3a,#2e2e2e)"><div class="sp"></div><div class="ar"></div></div>
  <div class="t" style="left:303px;top:813px;color:#b4b4b4">None</div>
  <div class="a" style="left:14px;top:825px;width:380px;height:15px;background:#2b2b2b;border-bottom:1px solid #343434"></div>
  <div class="a" style="left:394px;top:825px;width:7px;height:15px;background:#2e2e2e"></div><div class="a" style="left:401px;top:825px;width:865px;height:15px;background:#4a3c42"></div>
  <div class="a" style="left:401px;top:826px;width:865px;height:13px;background:#9a7e88"></div>
  <svg style="left:160px;top:830px" width="11" height="9" viewBox="0 0 11 9"><path d="M0 3.5 H2.5 M8.5 3.5 H11" stroke="#ccc" stroke-width="1.2"/><path d="M3 1.5 C3 0 8 0 8 1.5 L5.5 5 Z" fill="#eee"/><rect x="3" y="2.5" width="5" height="1.2" fill="#eee"/><rect x="0" y="7.5" width="11" height="1.2" fill="#7a7a7a"/></svg>
  <svg style="left:281px;top:828px" width="11" height="11" viewBox="0 0 11 11"><path d="M4.60 5.50 L4.54 5.38 L4.50 5.24 L4.48 5.10 L4.48 4.94 L4.51 4.78 L4.56 4.62 L4.64 4.46 L4.74 4.30 L4.87 4.16 L5.02 4.03 L5.20 3.91 L5.39 3.82 L5.61 3.76 L5.84 3.72 L6.08 3.72 L6.33 3.74 L6.57 3.81 L6.82 3.91 L7.06 4.04 L7.28 4.21 L7.48 4.41 L7.67 4.64 L7.82 4.90 L7.94 5.19 L8.03 5.50 L8.07 5.82 L8.07 6.16 L8.03 6.50 L7.94 6.84 L7.81 7.18 L7.62 7.50 L7.40 7.80 L7.13 8.07 L6.82 8.31 L6.48 8.52 L6.11 8.68 L5.71 8.80 L5.29 8.86 L4.86 8.87 L4.42 8.83 L3.98 8.73 L3.55 8.56 L3.14 8.35 L2.76 8.07 L2.41 7.75 L2.09 7.37 L1.82 6.96 L1.61 6.50 L1.45 6.01 L1.35 5.50 L1.32 4.97 L1.35 4.44 L1.46 3.90 L1.64 3.38 L1.88 2.87 L2.19 2.39 L2.56 1.95 L3.00 1.56 L3.48 1.22 L4.02 0.93" stroke="#dadada" stroke-width="1.3" fill="none"/></svg>
  <div class="dd" style="left:297px;top:826px;width:79px;height:13px;background:linear-gradient(#3a3a3a,#2e2e2e)"><div class="sp"></div><div class="ar"></div></div>
  <div class="t" style="left:303px;top:828px;color:#b4b4b4">None</div>
  <div class="a" style="left:239px;top:767px;width:11px;height:10px;background:#353535"></div><div class="a" style="left:239px;top:777px;width:11px;height:1px;background:#6a6a6a"></div>
  <div class="a" style="left:239px;top:782px;width:11px;height:10px;background:#353535"></div><div class="a" style="left:239px;top:792px;width:11px;height:1px;background:#6a6a6a"></div>
  <div class="a" style="left:239px;top:797px;width:11px;height:10px;background:#353535"></div><div class="a" style="left:239px;top:807px;width:11px;height:1px;background:#6a6a6a"></div>
  <div class="a" style="left:173px;top:812px;width:11px;height:10px;background:#353535"></div><div class="a" style="left:173px;top:822px;width:11px;height:1px;background:#6a6a6a"></div>
  <div class="a" style="left:226px;top:812px;width:11px;height:10px;background:#353535"></div><div class="a" style="left:226px;top:822px;width:11px;height:1px;background:#6a6a6a"></div>
  <div class="a" style="left:239px;top:812px;width:11px;height:10px;background:#353535"></div><div class="a" style="left:239px;top:822px;width:11px;height:1px;background:#6a6a6a"></div>
  <div class="a" style="left:252px;top:812px;width:11px;height:10px;background:#353535"></div><div class="a" style="left:252px;top:822px;width:11px;height:1px;background:#6a6a6a"></div>
  <div class="a" style="left:186px;top:822px;width:11px;height:1px;background:#6a6a6a"></div><div class="a" style="left:199px;top:822px;width:11px;height:1px;background:#6a6a6a"></div>
  <svg style="left:187px;top:812px" width="11" height="11" viewBox="0 0 11 11"><path d="M1 9 L9 1" stroke="#ddd" stroke-width="1.6" stroke-linecap="round"/></svg>
  <div class="t" style="left:200px;top:812px;color:#ccc;font-family:'Liberation Serif',serif;font-style:italic;font-size:12px;line-height:10px">fx</div>
  <div class="a" style="left:394px;top:840px;width:872px;height:46px;background:#2e2e2e"></div><div class="a" style="left:401px;top:840px;width:865px;height:46px;background:#3d3d3d"></div>
  <div class="a" style="left:393px;top:717px;width:1px;height:169px;background:#1a1a1a"></div>
  <div class="a" style="left:399px;top:722px;width:2px;height:164px;background:#bc1c1c"></div>
  <svg style="left:395px;top:732px" width="11" height="15" viewBox="0 0 11 15"><path d="M0.5 4 C0.5 0 10.5 0 10.5 4 V7 L5.5 14.5 L0.5 7 Z" fill="#f0c020" stroke="#a07010" stroke-width="0.6"/><g fill="#6a5010"><rect x="3" y="3" width="1" height="2"/><rect x="5" y="3" width="1" height="2"/><rect x="7" y="3" width="1" height="2"/><rect x="3.5" y="6" width="4" height="1"/></g></svg>
  
  <div class="a" style="left:14px;top:885px;width:1252px;height:1px;background:#151515"></div>
</div>
</body></html>
